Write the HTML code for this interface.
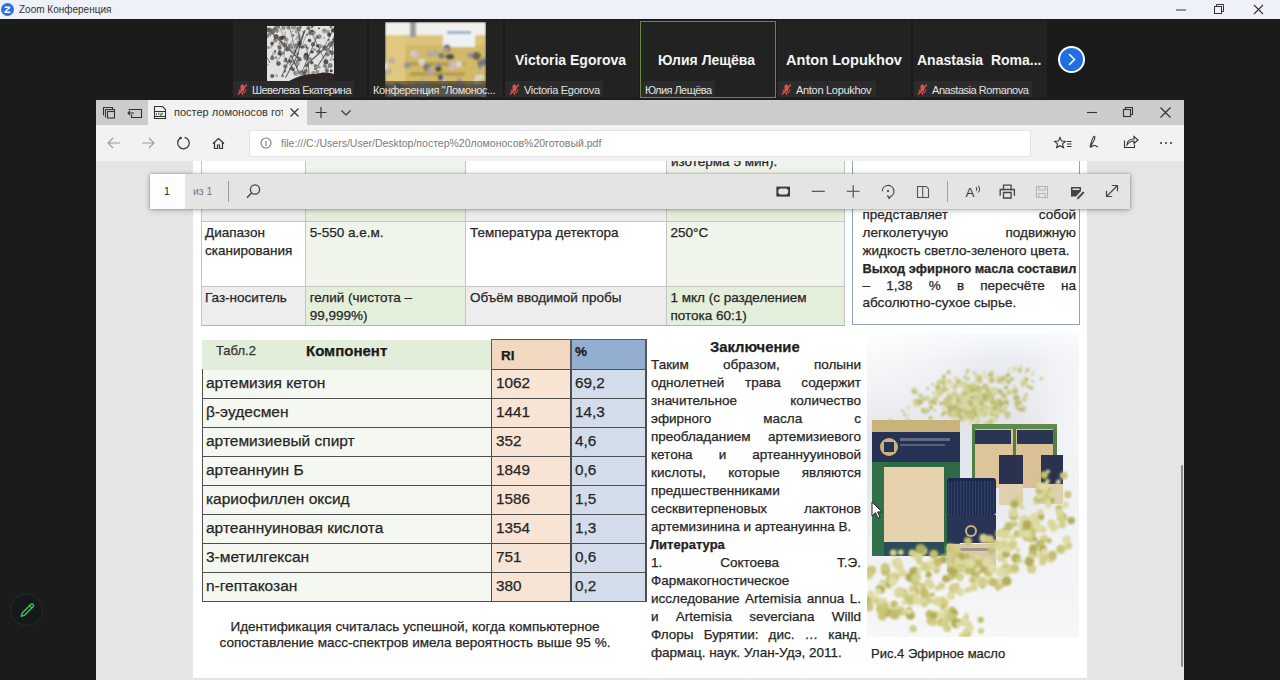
<!DOCTYPE html>
<html><head><meta charset="utf-8">
<style>
*{box-sizing:border-box;margin:0;padding:0}
html,body{width:1280px;height:680px;overflow:hidden;background:#1b1b1b;font-family:"Liberation Sans",sans-serif;position:relative}
.a{position:absolute}
#title{left:0;top:0;width:1280px;height:19px;background:#eef1f7}
.tile{top:20px;height:78px;width:134px;background:#222222}
.lbl{top:81px;height:16px;background:#2b2b2b;color:#e4e4e4;font-size:11px;letter-spacing:-0.3px;line-height:19px;white-space:nowrap}
.big{color:#f4f4f4;font-size:14px;font-weight:700;white-space:nowrap;top:52px;line-height:16px}
.mic{top:84px;width:11px;height:11px}
#win{left:96px;top:100px;width:1088px;height:580px;background:#e5e5e5;overflow:hidden}
#tabbar{left:0;top:0;width:1088px;height:25px;background:#cccccd}
#addrrow{left:0;top:25px;width:1088px;height:36px;background:#f2f2f2}
.t{white-space:nowrap}
.j{white-space:nowrap;text-align:justify;text-align-last:justify}
.pg .t,.pg .j{-webkit-text-stroke:0.25px currentColor}
</style></head><body>
<div id="title" class="a">
  <svg class="a" style="left:1px;top:3px" width="13" height="13" viewBox="0 0 13 13"><circle cx="6.5" cy="6.5" r="6.5" fill="#2b6fe0"/><path d="M3.6 3.6h5.6v1.3L5.4 8.6h4v1.3H3.4V8.6l3.8-3.7H3.6z" fill="#fff"/></svg>
  <div class="a" style="left:19px;top:3px;font-size:10px;line-height:13px;color:#333">Zoom Конференция</div>
</div>
<!-- gallery -->
<div class="a tile" style="left:233px"></div>
<div class="a tile" style="left:369px"></div>
<div class="a tile" style="left:505px"></div>
<div class="a tile" style="left:640px;top:21px;width:136px;height:77px;border:1px solid #6b8a3a"></div>
<div class="a tile" style="left:777px"></div>
<div class="a tile" style="left:913px"></div>
<!-- tile1 image: tree -->
<svg class="a" style="left:267px;top:26px" width="67" height="55" viewBox="0 0 67 55">
<defs><filter id="tb" x="-5%" y="-5%" width="110%" height="110%"><feGaussianBlur stdDeviation="0.7"/></filter></defs>
<rect width="67" height="55" fill="#e2e2e2"/>
<g filter="url(#tb)"><circle cx="15.9" cy="27.2" r="1.5" fill="#808080" opacity="0.64"/><circle cx="38.9" cy="30.3" r="2.4" fill="#2a2a2a" opacity="0.53"/><circle cx="15.7" cy="49.8" r="1.6" fill="#808080" opacity="0.64"/><circle cx="42.8" cy="7.5" r="1.9" fill="#808080" opacity="0.59"/><circle cx="1.0" cy="38.9" r="1.1" fill="#808080" opacity="0.42"/><circle cx="52.3" cy="41.2" r="1.3" fill="#808080" opacity="0.76"/><circle cx="58.9" cy="35.7" r="2.5" fill="#2a2a2a" opacity="0.76"/><circle cx="38.7" cy="48.2" r="1.0" fill="#6a6a6a" opacity="0.45"/><circle cx="9.1" cy="10.8" r="2.5" fill="#2a2a2a" opacity="0.79"/><circle cx="57.3" cy="21.1" r="2.3" fill="#808080" opacity="0.58"/><circle cx="39.2" cy="29.2" r="2.4" fill="#3a3a3a" opacity="0.83"/><circle cx="66.4" cy="33.6" r="1.1" fill="#6a6a6a" opacity="0.88"/><circle cx="60.6" cy="28.5" r="2.1" fill="#555" opacity="0.72"/><circle cx="66.2" cy="13.4" r="1.0" fill="#2a2a2a" opacity="0.83"/><circle cx="66.3" cy="4.4" r="2.2" fill="#2a2a2a" opacity="0.85"/><circle cx="1.3" cy="21.4" r="1.5" fill="#3a3a3a" opacity="0.42"/><circle cx="41.2" cy="2.2" r="2.1" fill="#6a6a6a" opacity="0.68"/><circle cx="61.8" cy="14.0" r="1.2" fill="#3a3a3a" opacity="0.55"/><circle cx="5.2" cy="30.0" r="0.9" fill="#555" opacity="0.89"/><circle cx="19.5" cy="13.2" r="2.0" fill="#6a6a6a" opacity="0.56"/><circle cx="64.2" cy="44.8" r="1.5" fill="#2a2a2a" opacity="0.83"/><circle cx="25.9" cy="43.3" r="2.0" fill="#3a3a3a" opacity="0.71"/><circle cx="63.0" cy="25.4" r="1.6" fill="#555" opacity="0.87"/><circle cx="29.3" cy="12.9" r="1.3" fill="#6a6a6a" opacity="0.41"/><circle cx="27.8" cy="29.0" r="0.8" fill="#808080" opacity="0.69"/><circle cx="8.9" cy="31.7" r="1.4" fill="#6a6a6a" opacity="0.74"/><circle cx="23.6" cy="35.3" r="2.1" fill="#3a3a3a" opacity="0.69"/><circle cx="64.0" cy="1.1" r="1.5" fill="#2a2a2a" opacity="0.55"/><circle cx="40.3" cy="8.9" r="1.1" fill="#6a6a6a" opacity="0.82"/><circle cx="17.7" cy="39.4" r="1.0" fill="#3a3a3a" opacity="0.89"/><circle cx="45.8" cy="6.6" r="1.7" fill="#6a6a6a" opacity="0.52"/><circle cx="12.6" cy="21.8" r="2.1" fill="#3a3a3a" opacity="0.70"/><circle cx="63.6" cy="33.7" r="1.2" fill="#555" opacity="0.44"/><circle cx="49.7" cy="10.9" r="1.8" fill="#6a6a6a" opacity="0.51"/><circle cx="8.1" cy="26.5" r="1.1" fill="#808080" opacity="0.49"/><circle cx="18.7" cy="40.4" r="2.0" fill="#808080" opacity="0.57"/><circle cx="8.7" cy="14.6" r="2.2" fill="#6a6a6a" opacity="0.63"/><circle cx="42.5" cy="14.5" r="1.8" fill="#3a3a3a" opacity="0.86"/><circle cx="10.5" cy="0.2" r="2.5" fill="#808080" opacity="0.89"/><circle cx="29.1" cy="47.5" r="2.5" fill="#555" opacity="0.42"/><circle cx="30.6" cy="37.7" r="2.1" fill="#6a6a6a" opacity="0.67"/><circle cx="59.6" cy="43.1" r="2.3" fill="#6a6a6a" opacity="0.46"/><circle cx="16.4" cy="1.8" r="2.2" fill="#808080" opacity="0.86"/><circle cx="60.1" cy="45.0" r="1.8" fill="#3a3a3a" opacity="0.64"/><circle cx="8.1" cy="25.2" r="1.2" fill="#3a3a3a" opacity="0.66"/><circle cx="27.7" cy="47.0" r="1.9" fill="#6a6a6a" opacity="0.46"/><circle cx="65.1" cy="27.0" r="2.3" fill="#3a3a3a" opacity="0.58"/><circle cx="13.2" cy="26.7" r="2.3" fill="#555" opacity="0.52"/><circle cx="18.3" cy="44.5" r="1.0" fill="#3a3a3a" opacity="0.64"/><circle cx="38.2" cy="20.0" r="2.2" fill="#555" opacity="0.53"/><circle cx="35.3" cy="21.1" r="1.7" fill="#3a3a3a" opacity="0.83"/><circle cx="51.9" cy="2.3" r="0.9" fill="#2a2a2a" opacity="0.89"/><circle cx="57.2" cy="4.3" r="1.7" fill="#6a6a6a" opacity="0.48"/><circle cx="4.8" cy="19.3" r="1.5" fill="#6a6a6a" opacity="0.58"/><circle cx="12.8" cy="16.4" r="1.0" fill="#808080" opacity="0.40"/><circle cx="48.4" cy="39.8" r="1.8" fill="#3a3a3a" opacity="0.59"/><circle cx="40.5" cy="39.1" r="1.5" fill="#3a3a3a" opacity="0.71"/><circle cx="28.9" cy="18.6" r="1.7" fill="#6a6a6a" opacity="0.61"/><circle cx="46.5" cy="23.0" r="1.2" fill="#808080" opacity="0.54"/><circle cx="39.5" cy="40.2" r="1.2" fill="#555" opacity="0.84"/><circle cx="62.7" cy="18.7" r="2.4" fill="#6a6a6a" opacity="0.46"/><circle cx="46.3" cy="47.0" r="2.1" fill="#808080" opacity="0.80"/><circle cx="44.7" cy="36.7" r="1.8" fill="#3a3a3a" opacity="0.81"/><circle cx="48.0" cy="23.7" r="1.2" fill="#2a2a2a" opacity="0.42"/><circle cx="6.2" cy="5.0" r="2.4" fill="#555" opacity="0.81"/><circle cx="22.9" cy="42.6" r="0.8" fill="#3a3a3a" opacity="0.74"/><circle cx="56.0" cy="47.6" r="1.8" fill="#3a3a3a" opacity="0.42"/><circle cx="51.4" cy="25.6" r="2.1" fill="#3a3a3a" opacity="0.68"/><circle cx="6.7" cy="27.7" r="1.8" fill="#808080" opacity="0.49"/><circle cx="5.2" cy="49.9" r="2.0" fill="#2a2a2a" opacity="0.71"/><circle cx="50.5" cy="19.7" r="1.5" fill="#2a2a2a" opacity="0.87"/><circle cx="37.3" cy="48.3" r="1.5" fill="#555" opacity="0.89"/><circle cx="27.7" cy="37.4" r="1.1" fill="#808080" opacity="0.78"/><circle cx="45.1" cy="25.9" r="1.7" fill="#2a2a2a" opacity="0.85"/><circle cx="10.0" cy="4.8" r="2.1" fill="#808080" opacity="0.88"/><circle cx="39.3" cy="42.9" r="1.0" fill="#555" opacity="0.47"/><circle cx="34.5" cy="46.7" r="2.3" fill="#808080" opacity="0.88"/><circle cx="19.8" cy="35.3" r="1.5" fill="#808080" opacity="0.69"/><circle cx="17.9" cy="10.9" r="0.8" fill="#2a2a2a" opacity="0.80"/><circle cx="13.4" cy="28.5" r="1.2" fill="#2a2a2a" opacity="0.79"/><circle cx="9.6" cy="49.6" r="1.7" fill="#808080" opacity="0.50"/><circle cx="38.9" cy="45.1" r="2.0" fill="#3a3a3a" opacity="0.64"/><circle cx="48.3" cy="42.8" r="1.5" fill="#3a3a3a" opacity="0.63"/><circle cx="15.4" cy="11.7" r="2.1" fill="#3a3a3a" opacity="0.88"/><circle cx="57.2" cy="12.1" r="1.1" fill="#6a6a6a" opacity="0.47"/><circle cx="41.7" cy="33.8" r="0.9" fill="#6a6a6a" opacity="0.48"/><circle cx="3.0" cy="9.2" r="1.0" fill="#3a3a3a" opacity="0.46"/><circle cx="17.7" cy="45.7" r="0.9" fill="#2a2a2a" opacity="0.69"/><circle cx="45.3" cy="0.3" r="1.4" fill="#2a2a2a" opacity="0.59"/><circle cx="5.2" cy="32.2" r="2.1" fill="#2a2a2a" opacity="0.60"/><circle cx="36.5" cy="6.0" r="1.3" fill="#2a2a2a" opacity="0.46"/><circle cx="59.4" cy="45.4" r="1.0" fill="#6a6a6a" opacity="0.74"/><circle cx="24.7" cy="22.5" r="2.0" fill="#6a6a6a" opacity="0.45"/><circle cx="63.3" cy="16.9" r="1.8" fill="#808080" opacity="0.46"/><circle cx="33.1" cy="17.6" r="2.1" fill="#808080" opacity="0.77"/><circle cx="43.3" cy="36.5" r="1.1" fill="#6a6a6a" opacity="0.84"/><circle cx="43.9" cy="6.2" r="2.5" fill="#555" opacity="0.86"/><circle cx="43.2" cy="32.5" r="1.6" fill="#6a6a6a" opacity="0.72"/><circle cx="30.7" cy="15.6" r="1.1" fill="#3a3a3a" opacity="0.45"/><circle cx="12.1" cy="27.7" r="1.8" fill="#2a2a2a" opacity="0.58"/><circle cx="17.8" cy="19.2" r="2.4" fill="#3a3a3a" opacity="0.64"/><circle cx="18.2" cy="34.8" r="1.7" fill="#6a6a6a" opacity="0.87"/><circle cx="30.0" cy="40.5" r="0.9" fill="#2a2a2a" opacity="0.82"/><circle cx="7.5" cy="13.5" r="1.0" fill="#3a3a3a" opacity="0.68"/><circle cx="61.0" cy="5.6" r="2.1" fill="#808080" opacity="0.61"/><circle cx="49.8" cy="40.8" r="2.1" fill="#808080" opacity="0.70"/><circle cx="57.6" cy="39.9" r="1.8" fill="#555" opacity="0.68"/><circle cx="13.5" cy="12.5" r="2.2" fill="#3a3a3a" opacity="0.82"/><circle cx="29.8" cy="20.4" r="2.3" fill="#6a6a6a" opacity="0.68"/><circle cx="39.1" cy="31.7" r="2.6" fill="#6a6a6a" opacity="0.85"/><circle cx="44.7" cy="1.5" r="1.1" fill="#3a3a3a" opacity="0.45"/><circle cx="50.6" cy="11.7" r="1.1" fill="#2a2a2a" opacity="0.50"/><circle cx="52.4" cy="10.6" r="2.3" fill="#2a2a2a" opacity="0.46"/><circle cx="19.0" cy="32.9" r="1.1" fill="#2a2a2a" opacity="0.80"/><circle cx="41.8" cy="2.5" r="1.4" fill="#555" opacity="0.65"/><circle cx="33.4" cy="0.9" r="1.4" fill="#6a6a6a" opacity="0.84"/><circle cx="46.5" cy="6.7" r="2.3" fill="#808080" opacity="0.79"/><circle cx="2.3" cy="4.0" r="2.6" fill="#555" opacity="0.87"/><circle cx="57.7" cy="21.9" r="2.2" fill="#2a2a2a" opacity="0.56"/><circle cx="52.7" cy="20.4" r="2.3" fill="#555" opacity="0.60"/><circle cx="31.7" cy="3.4" r="2.3" fill="#555" opacity="0.72"/><circle cx="20.4" cy="23.2" r="2.2" fill="#2a2a2a" opacity="0.62"/><circle cx="30.5" cy="1.9" r="1.3" fill="#6a6a6a" opacity="0.62"/><circle cx="24.2" cy="20.1" r="2.5" fill="#555" opacity="0.53"/><circle cx="24.8" cy="42.8" r="1.8" fill="#555" opacity="0.50"/><circle cx="11.4" cy="20.2" r="1.1" fill="#3a3a3a" opacity="0.47"/><circle cx="40.8" cy="22.1" r="1.1" fill="#3a3a3a" opacity="0.60"/><circle cx="21.3" cy="1.6" r="2.1" fill="#555" opacity="0.60"/><circle cx="26.6" cy="1.3" r="2.5" fill="#555" opacity="0.52"/><circle cx="26.1" cy="9.5" r="1.4" fill="#3a3a3a" opacity="0.57"/><circle cx="8.3" cy="2.6" r="2.1" fill="#6a6a6a" opacity="0.89"/><circle cx="63.1" cy="39.5" r="2.5" fill="#2a2a2a" opacity="0.52"/><circle cx="17.8" cy="40.7" r="1.9" fill="#6a6a6a" opacity="0.56"/><circle cx="3.8" cy="21.8" r="1.0" fill="#808080" opacity="0.40"/><circle cx="2.0" cy="4.5" r="1.1" fill="#3a3a3a" opacity="0.64"/><circle cx="12.7" cy="25.5" r="1.4" fill="#2a2a2a" opacity="0.57"/><circle cx="32.1" cy="17.6" r="2.0" fill="#2a2a2a" opacity="0.55"/><circle cx="40.7" cy="47.3" r="1.0" fill="#6a6a6a" opacity="0.49"/><circle cx="27.7" cy="25.4" r="1.8" fill="#808080" opacity="0.74"/><circle cx="62.2" cy="8.7" r="2.1" fill="#2a2a2a" opacity="0.82"/><circle cx="37.1" cy="46.2" r="1.5" fill="#2a2a2a" opacity="0.62"/><circle cx="29.8" cy="35.1" r="1.4" fill="#555" opacity="0.65"/><circle cx="50.4" cy="45.8" r="2.1" fill="#2a2a2a" opacity="0.42"/><circle cx="11.5" cy="37.6" r="2.3" fill="#3a3a3a" opacity="0.78"/><circle cx="45.4" cy="4.9" r="1.2" fill="#3a3a3a" opacity="0.84"/><circle cx="58.4" cy="22.5" r="2.4" fill="#6a6a6a" opacity="0.90"/><circle cx="0.1" cy="9.7" r="2.2" fill="#3a3a3a" opacity="0.57"/><circle cx="20.9" cy="22.5" r="2.3" fill="#555" opacity="0.52"/><circle cx="3.3" cy="7.6" r="2.0" fill="#808080" opacity="0.89"/><circle cx="7.5" cy="14.4" r="1.2" fill="#808080" opacity="0.66"/><circle cx="33.8" cy="45.4" r="1.4" fill="#808080" opacity="0.79"/><circle cx="31.3" cy="31.1" r="0.9" fill="#3a3a3a" opacity="0.70"/><circle cx="57.5" cy="5.1" r="2.5" fill="#6a6a6a" opacity="0.44"/><circle cx="31.2" cy="11.1" r="2.3" fill="#808080" opacity="0.45"/><circle cx="32.5" cy="33.4" r="2.1" fill="#2a2a2a" opacity="0.70"/><circle cx="29.9" cy="5.5" r="2.3" fill="#808080" opacity="0.62"/><circle cx="25.4" cy="5.8" r="0.8" fill="#6a6a6a" opacity="0.76"/><circle cx="5.2" cy="17.3" r="1.7" fill="#3a3a3a" opacity="0.86"/><circle cx="46.0" cy="18.2" r="2.2" fill="#3a3a3a" opacity="0.70"/><circle cx="14.3" cy="17.5" r="2.6" fill="#6a6a6a" opacity="0.52"/><path d="M29.4 28.8L22.3 0.0" stroke="#333" stroke-width="0.7" opacity=".7"/><path d="M14.7 50.6L24.1 29.1" stroke="#333" stroke-width="1.1" opacity=".7"/><path d="M57.1 32.9L44.8 7.3" stroke="#333" stroke-width="0.8" opacity=".7"/><path d="M59.9 54.4L58.7 29.7" stroke="#333" stroke-width="0.5" opacity=".7"/><path d="M64.2 20.6L79.8 9.9" stroke="#333" stroke-width="0.6" opacity=".7"/><path d="M33.7 22.1L32.6 7.3" stroke="#333" stroke-width="0.7" opacity=".7"/><path d="M32.9 21.3L31.7 6.4" stroke="#333" stroke-width="1.1" opacity=".7"/><path d="M9.6 35.5L25.9 14.4" stroke="#333" stroke-width="0.7" opacity=".7"/><path d="M32.6 48.3L24.0 29.0" stroke="#333" stroke-width="1.1" opacity=".7"/><path d="M42.5 53.0L39.7 19.5" stroke="#333" stroke-width="0.9" opacity=".7"/><path d="M66.9 27.8L85.2 10.6" stroke="#333" stroke-width="0.5" opacity=".7"/><path d="M25.0 32.6L38.3 3.9" stroke="#333" stroke-width="1.2" opacity=".7"/><path d="M34.8 20.5L40.0 6.8" stroke="#333" stroke-width="0.5" opacity=".7"/><path d="M63.7 20.1L83.0 -9.8" stroke="#333" stroke-width="0.8" opacity=".7"/><path d="M64.7 32.7L66.8 10.4" stroke="#333" stroke-width="0.7" opacity=".7"/><path d="M18.5 51.7L32.0 26.6" stroke="#333" stroke-width="1.1" opacity=".7"/><path d="M30.2 29.2L37.0 6.7" stroke="#333" stroke-width="1.1" opacity=".7"/><path d="M22.7 21.0L4.2 -13.9" stroke="#333" stroke-width="0.6" opacity=".7"/><path d="M51.0 39.7L69.2 11.1" stroke="#333" stroke-width="1.2" opacity=".7"/><path d="M27.6 46.3L21.1 32.9" stroke="#333" stroke-width="0.5" opacity=".7"/><path d="M3.0 37.0L-14.5 6.6" stroke="#333" stroke-width="0.9" opacity=".7"/><path d="M34.9 46.4L49.3 12.0" stroke="#333" stroke-width="0.9" opacity=".7"/><path d="M24.9 42.1L16.6 30.3" stroke="#333" stroke-width="0.6" opacity=".7"/><path d="M55.8 23.6L66.7 2.5" stroke="#333" stroke-width="0.7" opacity=".7"/><path d="M17.1 29.9L18.3 5.5" stroke="#333" stroke-width="0.6" opacity=".7"/>
<path d="M0 2L33 34" stroke="#6e5d50" stroke-width="1.6"/><path d="M67 14L38 40" stroke="#6e5d50" stroke-width="1.4"/>
<path d="M22 55Q36 47 48 48Q60 45 67 48V55z" fill="#2e2622"/>
</g></svg>
<!-- tile2 image: conference -->
<svg class="a" style="left:385px;top:22px" width="101" height="75" viewBox="0 0 101 75">
<defs><filter id="cb" x="-5%" y="-5%" width="110%" height="110%"><feGaussianBlur stdDeviation="1"/></filter></defs>
<g filter="url(#cb)">
<rect width="101" height="75" fill="#d2b968"/>
<rect width="101" height="13" fill="#f2f0ea"/>
<rect x="0" y="13" width="101" height="10" fill="#dcc47c"/>
<rect x="58" y="5" width="32" height="20" fill="#eef2f4"/><rect x="62" y="9" width="24" height="3" fill="#9ab0c0"/>
<rect x="25" y="0" width="6" height="15" fill="#9a9a9a"/>
<rect x="0" y="13" width="20" height="62" fill="#e0c880"/>
<path d="M20 40h60v4H20zM25 50h55v4H25zM30 60h50v4H30z" fill="#b89c50"/>
<ellipse cx="3.8" cy="49.3" rx="2.6" ry="3.6" fill="#b4a8a0" opacity=".85"/><ellipse cx="61.9" cy="26.5" rx="3.4" ry="3.9" fill="#3a3a40" opacity=".85"/><ellipse cx="12.6" cy="64.3" rx="3.9" ry="3.2" fill="#3a3a40" opacity=".85"/><ellipse cx="67.5" cy="43.6" rx="3.3" ry="4.7" fill="#c8c0d0" opacity=".85"/><ellipse cx="65.0" cy="34.8" rx="4.3" ry="3.0" fill="#3a3a40" opacity=".85"/><ellipse cx="95.1" cy="44.8" rx="2.1" ry="3.0" fill="#8d8fa8" opacity=".85"/><ellipse cx="95.3" cy="40.9" rx="3.0" ry="3.2" fill="#6a6e80" opacity=".85"/><ellipse cx="42.2" cy="45.7" rx="4.2" ry="3.7" fill="#6a6e80" opacity=".85"/><ellipse cx="74.5" cy="59.9" rx="2.3" ry="4.1" fill="#8d8fa8" opacity=".85"/><ellipse cx="63.7" cy="65.9" rx="2.0" ry="3.2" fill="#5a5550" opacity=".85"/><ellipse cx="7.0" cy="38.4" rx="3.2" ry="3.2" fill="#b4a8a0" opacity=".85"/><ellipse cx="56.5" cy="33.7" rx="3.2" ry="2.9" fill="#6a6e80" opacity=".85"/><ellipse cx="91.5" cy="33.9" rx="4.5" ry="4.2" fill="#5a5550" opacity=".85"/><ellipse cx="0.9" cy="44.6" rx="2.5" ry="4.1" fill="#e0ddd8" opacity=".85"/><ellipse cx="19.1" cy="66.1" rx="4.2" ry="2.6" fill="#6a6e80" opacity=".85"/><ellipse cx="54.0" cy="44.1" rx="2.3" ry="3.5" fill="#8d8fa8" opacity=".85"/><ellipse cx="28.4" cy="31.6" rx="2.4" ry="2.8" fill="#e0ddd8" opacity=".85"/><ellipse cx="94.7" cy="55.2" rx="4.3" ry="2.5" fill="#e0ddd8" opacity=".85"/><ellipse cx="100.7" cy="74.0" rx="2.6" ry="3.4" fill="#3a3a40" opacity=".85"/><ellipse cx="10.5" cy="67.3" rx="3.2" ry="4.3" fill="#b4a8a0" opacity=".85"/><ellipse cx="75.6" cy="64.1" rx="3.4" ry="3.7" fill="#b4a8a0" opacity=".85"/><ellipse cx="30.8" cy="32.5" rx="3.1" ry="3.5" fill="#c8c0d0" opacity=".85"/><ellipse cx="60.0" cy="71.6" rx="4.1" ry="2.9" fill="#c8c0d0" opacity=".85"/><ellipse cx="84.8" cy="33.4" rx="2.7" ry="3.0" fill="#8d8fa8" opacity=".85"/><ellipse cx="61.0" cy="27.8" rx="3.5" ry="2.9" fill="#b4a8a0" opacity=".85"/><ellipse cx="1.4" cy="68.5" rx="4.0" ry="5.0" fill="#5a5550" opacity=".85"/><ellipse cx="37.8" cy="59.9" rx="2.7" ry="3.7" fill="#b4a8a0" opacity=".85"/><ellipse cx="44.6" cy="32.3" rx="3.5" ry="3.3" fill="#b4a8a0" opacity=".85"/><ellipse cx="56.9" cy="56.8" rx="3.5" ry="4.3" fill="#c8c0d0" opacity=".85"/><ellipse cx="99.0" cy="71.8" rx="4.2" ry="4.6" fill="#e0ddd8" opacity=".85"/><ellipse cx="98.6" cy="39.9" rx="2.5" ry="4.0" fill="#6a6e80" opacity=".85"/><ellipse cx="74.0" cy="42.1" rx="3.6" ry="3.2" fill="#e0ddd8" opacity=".85"/><ellipse cx="45.7" cy="48.9" rx="3.3" ry="4.7" fill="#b4a8a0" opacity=".85"/><ellipse cx="53.4" cy="47.1" rx="3.5" ry="2.7" fill="#3a3a40" opacity=".85"/><ellipse cx="55.5" cy="55.5" rx="2.7" ry="3.1" fill="#3a3a40" opacity=".85"/><ellipse cx="38.8" cy="74.1" rx="2.9" ry="3.0" fill="#b4a8a0" opacity=".85"/><ellipse cx="49.9" cy="30.9" rx="3.8" ry="3.5" fill="#b4a8a0" opacity=".85"/><ellipse cx="36.5" cy="40.0" rx="3.3" ry="3.5" fill="#e0ddd8" opacity=".85"/><ellipse cx="91.7" cy="59.3" rx="2.3" ry="3.7" fill="#e0ddd8" opacity=".85"/><ellipse cx="22.2" cy="43.5" rx="3.5" ry="2.8" fill="#8d8fa8" opacity=".85"/>
<rect x="0" y="62" width="101" height="13" fill="#6a665e" opacity=".6"/>
</g></svg>
<!-- big names -->
<div class="a big" style="left:515px">Victoria Egorova</div>
<div class="a big" style="left:658px">Юлия Лещёва</div>
<div class="a big" style="left:786px;font-size:14.6px">Anton Lopukhov</div>
<div class="a big" style="left:917px;letter-spacing:0">Anastasia&nbsp; Roma...</div>
<!-- labels -->
<div class="a lbl" style="left:233px;width:121px;padding-left:19px;letter-spacing:-0.55px">Шевелева Екатерина</div>
<div class="a lbl" style="left:369px;width:133px;padding-left:4px;letter-spacing:-0.4px;background:rgba(40,40,40,.55)">Конференция "Ломонос...</div>
<div class="a lbl" style="left:505px;width:98px;padding-left:19px">Victoria Egorova</div>
<div class="a lbl" style="left:641px;width:74px;padding-left:4px;letter-spacing:-0.55px">Юлия Лещёва</div>
<div class="a lbl" style="left:778px;width:98px;padding-left:18px">Anton Lopukhov</div>
<div class="a lbl" style="left:914px;width:118px;padding-left:18px;letter-spacing:-0.45px">Anastasia Romanova</div>
<!-- mic icons -->
<svg class="a mic" style="left:237px" viewBox="0 0 11 11"><rect x="3.5" y="0.5" width="4" height="7" rx="2" fill="#d9534f"/><path d="M2 5.5a3.5 3.5 0 0 0 7 0M5.5 9v2" stroke="#d9534f" stroke-width="1" fill="none"/><path d="M1 10.5L10 0.5" stroke="#d9534f" stroke-width="1.2"/></svg>
<svg class="a mic" style="left:509px" viewBox="0 0 11 11"><rect x="3.5" y="0.5" width="4" height="7" rx="2" fill="#d9534f"/><path d="M2 5.5a3.5 3.5 0 0 0 7 0M5.5 9v2" stroke="#d9534f" stroke-width="1" fill="none"/><path d="M1 10.5L10 0.5" stroke="#d9534f" stroke-width="1.2"/></svg>
<svg class="a mic" style="left:781px" viewBox="0 0 11 11"><rect x="3.5" y="0.5" width="4" height="7" rx="2" fill="#d9534f"/><path d="M2 5.5a3.5 3.5 0 0 0 7 0M5.5 9v2" stroke="#d9534f" stroke-width="1" fill="none"/><path d="M1 10.5L10 0.5" stroke="#d9534f" stroke-width="1.2"/></svg>
<svg class="a mic" style="left:917px" viewBox="0 0 11 11"><rect x="3.5" y="0.5" width="4" height="7" rx="2" fill="#d9534f"/><path d="M2 5.5a3.5 3.5 0 0 0 7 0M5.5 9v2" stroke="#d9534f" stroke-width="1" fill="none"/><path d="M1 10.5L10 0.5" stroke="#d9534f" stroke-width="1.2"/></svg>
<!-- next arrow -->
<div class="a" style="left:1058px;top:46px;width:27px;height:27px;border-radius:50%;background:#fff"></div>
<div class="a" style="left:1060px;top:48px;width:23px;height:23px;border-radius:50%;background:#1e6fe0"></div>
<svg class="a" style="left:1064px;top:52px" width="15" height="15" viewBox="0 0 15 15"><path d="M5.5 2.5L10.5 7.5L5.5 12.5" stroke="#fff" stroke-width="1.6" fill="none" stroke-linecap="round"/></svg>
<!-- window controls zoom -->
<svg class="a" style="left:1170px;top:4px" width="100" height="12" viewBox="0 0 100 12"><path d="M6 6h10" stroke="#333" stroke-width="1"/><rect x="44.5" y="2.5" width="7" height="7" fill="none" stroke="#333"/><path d="M46.5 2.5v-2h7v7h-2" fill="none" stroke="#333"/><path d="M84 1l9 9M93 1l-9 9" stroke="#333" stroke-width="1.1"/></svg>
<!-- pen button -->
<svg class="a" style="left:9px;top:592px" width="36" height="36" viewBox="0 0 36 36"><circle cx="17.6" cy="17.6" r="16" fill="#14191b" stroke="#262b2e" stroke-width="1"/>
<path d="M12.2 24.3l1.2-3.6 8.3-8.3a1.6 1.6 0 0 1 2.3 0l.1.1a1.6 1.6 0 0 1 0 2.3l-8.3 8.3z" fill="none" stroke="#3cc35c" stroke-width="1.4" stroke-linejoin="round"/><path d="M20.5 13.6l2.4 2.4" stroke="#3cc35c" stroke-width="1.2"/></svg>
<div id="win" class="a">
  <div id="tabbar" class="a"></div>
  <div id="addrrow" class="a"></div>
  <!-- active tab -->
  <div class="a" style="left:52px;top:0;width:159px;height:25px;background:#f2f2f2"></div>
  <!-- tab bar icons -->
  <svg class="a" style="left:0;top:0" width="1088" height="25" viewBox="0 0 1088 25">
    <g fill="none" stroke="#333" stroke-width="1.1">
      <path d="M7.5 15.5v-8h9v2M9.5 17.5v-8h9v2"/><rect x="11.5" y="11.5" width="7" height="6.5"/>
      <path d="M32.5 9.5h13v8h-10v-3M38 13h-6M34 11l-2 2 2 2"/>
      <!-- pdf icon -->
      <path d="M58.5 18.5v-12h8l3 3v9z"/><path d="M58.5 11.5h11M58.5 16.5h11"/>
      <!-- close X -->
      <path d="M194.5 8.5l8 8M202.5 8.5l-8 8"/>
      <!-- plus -->
      <path d="M219.5 12.5h11M225 7v11" stroke-width="1.2"/>
      <path d="M245.5 10.5l4.5 4.5 4.5-4.5"/>
      <!-- window controls -->
      <path d="M991 12.5h10"/>
      <rect x="1027.5" y="9.5" width="7" height="7"/><path d="M1029.5 9.5v-2h7v7h-2"/>
      <path d="M1064.5 7.5l10 10M1074.5 7.5l-10 10" stroke-width="1.2"/>
    </g>
    <path d="M60.5 13v2.4M62 13h1v1.2h-1M64.3 13v2.4h1M67 13h-1.2v2.4M65.8 14.2h1" stroke="#555" stroke-width=".8" fill="none"/>
  </svg>
  <div class="a" style="left:78px;top:5px;width:109px;height:15px;overflow:hidden;font-size:11px;line-height:15px;color:#333;white-space:nowrap;">постер ломоносов готовый.pdf</div>
  <!-- address box -->
  <div class="a" style="left:153px;top:30px;width:782px;height:27px;background:#fff;border:1px solid #e3e3e3"></div>
  <svg class="a" style="left:0;top:25px" width="1088" height="36" viewBox="0 0 1088 36">
    <g fill="none" stroke-width="1.1">
      <path d="M12 18h12M17 13l-5 5 5 5" stroke="#9a9a9a"/>
      <path d="M46 18h12M53 13l5 5-5 5" stroke="#9a9a9a"/>
      <path d="M88.6 12.3A5.8 5.8 0 1 1 84.4 13.1" stroke="#333" stroke-width="1.2"/><circle cx="84.6" cy="13" r="1.3" fill="#333" stroke="none"/>
      <path d="M117 18.5l5.5-5 5.5 5M118.5 17v6.5h3v-3.5h2v3.5h3v-6.5" stroke="#333" stroke-width="1.2"/>
      <circle cx="170" cy="18" r="5" stroke="#777"/><path d="M170 16v5" stroke="#777"/>
      <!-- right icons -->
      <path d="M964 12.5l1.6 3.6 3.9.3-3 2.5 1 3.8-3.5-2-3.4 2 1-3.8-3-2.5 3.9-.3z" stroke="#333"/><path d="M971 16.5h4.5M971 19h4.5M971 21.5h4.5" stroke="#333"/>
      <path d="M994 22c1-4 2-8 3.5-10s2.5 1-1 6-2 5 0 3 2.5 0 5.5 1" stroke="#333"/>
      <path d="M1028.5 15.5v7h10v-3" stroke="#333"/><path d="M1031 20c0-4 3-6 7-6v-2.5l4 3.5-4 3.5v-2.5c-3 0-5 1-7 4z" stroke="#333"/>
    </g>
    <g fill="#333"><circle cx="1065" cy="18" r="1"/><circle cx="1070" cy="18" r="1"/><circle cx="1075" cy="18" r="1"/></g>
  </svg>
  <div class="a" style="left:185px;top:36px;font-size:10.5px;line-height:14px;color:#7a7a7a;white-space:nowrap">file:///C:/Users/User/Desktop/постер%20ломоносов%20готовый.pdf</div>
  <!-- content -->
  <div class="a pg" style="left:97px;top:61px;width:894px;height:517px;background:#fff;overflow:hidden">
  <div class="a" style="left:0;top:0;width:894px;height:517px">
<div class="a" style="left:8.0px;top:-41.0px;width:104.5px;height:75.0px;background:#ffffff;"></div>
<div class="a" style="left:112.5px;top:-41.0px;width:160.0px;height:75.0px;background:#eff5ea;"></div>
<div class="a" style="left:272.5px;top:-41.0px;width:200.5px;height:75.0px;background:#ffffff;"></div>
<div class="a" style="left:473.0px;top:-41.0px;width:178.0px;height:75.0px;background:#eff5ea;"></div>
<div class="a" style="left:8.0px;top:34.0px;width:104.5px;height:26.0px;background:#ededed;"></div>
<div class="a" style="left:112.5px;top:34.0px;width:160.0px;height:26.0px;background:#e3eedb;"></div>
<div class="a" style="left:272.5px;top:34.0px;width:200.5px;height:26.0px;background:#ededed;"></div>
<div class="a" style="left:473.0px;top:34.0px;width:178.0px;height:26.0px;background:#e3eedb;"></div>
<div class="a" style="left:8.0px;top:60.0px;width:104.5px;height:65.0px;background:#ffffff;"></div>
<div class="a" style="left:112.5px;top:60.0px;width:160.0px;height:65.0px;background:#eff5ea;"></div>
<div class="a" style="left:272.5px;top:60.0px;width:200.5px;height:65.0px;background:#ffffff;"></div>
<div class="a" style="left:473.0px;top:60.0px;width:178.0px;height:65.0px;background:#eff5ea;"></div>
<div class="a" style="left:8.0px;top:125.0px;width:104.5px;height:39.5px;background:#ededed;"></div>
<div class="a" style="left:112.5px;top:125.0px;width:160.0px;height:39.5px;background:#e3eedb;"></div>
<div class="a" style="left:272.5px;top:125.0px;width:200.5px;height:39.5px;background:#ededed;"></div>
<div class="a" style="left:473.0px;top:125.0px;width:178.0px;height:39.5px;background:#e3eedb;"></div>
<div class="a" style="left:7.5px;top:-41.0px;width:1.0px;height:205.5px;background:#c4c4c4;"></div>
<div class="a" style="left:112.0px;top:-41.0px;width:1.0px;height:205.5px;background:#c4c4c4;"></div>
<div class="a" style="left:272.0px;top:-41.0px;width:1.0px;height:205.5px;background:#c4c4c4;"></div>
<div class="a" style="left:472.5px;top:-41.0px;width:1.0px;height:205.5px;background:#c4c4c4;"></div>
<div class="a" style="left:650.5px;top:-41.0px;width:1.0px;height:205.5px;background:#c4c4c4;"></div>
<div class="a" style="left:7.5px;top:33.5px;width:644.0px;height:1.0px;background:#c4c4c4;"></div>
<div class="a" style="left:7.5px;top:59.5px;width:644.0px;height:1.0px;background:#c4c4c4;"></div>
<div class="a" style="left:7.5px;top:124.5px;width:644.0px;height:1.0px;background:#c4c4c4;"></div>
<div class="a" style="left:7.5px;top:164.0px;width:644.0px;height:1.0px;background:#c4c4c4;"></div>
<div class="a" style="left:7.5px;top:164.0px;width:644.0px;height:1.2px;background:#b4b4b4;"></div>
<div class="a t" style="left:478.0px;top:-7.98px;font-size:13.5px;line-height:18px;color:#262626;">изотерма 5 мин).</div>
<div class="a t" style="left:12.0px;top:63.32px;font-size:13.5px;line-height:18px;color:#262626;">Диапазон</div>
<div class="a t" style="left:12.0px;top:81.32px;font-size:13.5px;line-height:18px;color:#262626;">сканирования</div>
<div class="a t" style="left:116.7px;top:63.32px;font-size:13.5px;line-height:18px;color:#262626;">5-550 а.е.м.</div>
<div class="a t" style="left:277.0px;top:63.32px;font-size:13.5px;line-height:18px;color:#262626;">Температура детектора</div>
<div class="a t" style="left:477.5px;top:63.32px;font-size:13.5px;line-height:18px;color:#262626;">250°C</div>
<div class="a t" style="left:12.0px;top:128.32px;font-size:13.5px;line-height:18px;color:#262626;">Газ-носитель</div>
<div class="a t" style="left:116.7px;top:128.32px;font-size:13.5px;line-height:18px;color:#262626;">гелий (чистота –</div>
<div class="a t" style="left:116.7px;top:146.32px;font-size:13.5px;line-height:18px;color:#262626;">99,999%)</div>
<div class="a t" style="left:277.0px;top:128.32px;font-size:13.5px;line-height:18px;color:#262626;">Объём вводимой пробы</div>
<div class="a t" style="left:477.5px;top:128.32px;font-size:13.5px;line-height:18px;color:#262626;">1 мкл (с разделением</div>
<div class="a t" style="left:477.5px;top:146.32px;font-size:13.5px;line-height:18px;color:#262626;">потока 60:1)</div>
<div class="a" style="left:659px;top:-41px;width:228px;height:204.5px;border:1px solid #8ea3bd;background:#fff"></div>
<div class="a j" style="left:669.5px;top:45.32px;width:213.5px;font-size:13.5px;line-height:18px;color:#262626;">представляет собой</div>
<div class="a j" style="left:669.5px;top:62.92px;width:213.5px;font-size:13.5px;line-height:18px;color:#262626;">легколетучую подвижную</div>
<div class="a t" style="left:669.5px;top:80.62px;width:213.5px;font-size:13.5px;line-height:18px;color:#262626;">жидкость светло-зеленого цвета.</div>
<div class="a j" style="left:669.5px;top:98.56px;width:213.5px;font-size:12.8px;line-height:18px;color:#262626;font-weight:700;">Выход эфирного масла составил</div>
<div class="a j" style="left:669.5px;top:115.82px;width:213.5px;font-size:13.5px;line-height:18px;color:#262626;">– 1,38 % в пересчёте на</div>
<div class="a t" style="left:669.5px;top:133.32px;width:213.5px;font-size:13.5px;line-height:18px;color:#262626;">абсолютно-сухое сырье.</div>
<div class="a" style="left:8.5px;top:178.5px;width:290.0px;height:30.0px;background:#e2eed9;"></div>
<div class="a" style="left:298.5px;top:178.5px;width:79.5px;height:30.0px;background:#f2d8c0;"></div>
<div class="a" style="left:378.0px;top:178.5px;width:75.0px;height:30.0px;background:#93aed0;"></div>
<div class="a" style="left:9.0px;top:208.5px;width:289.5px;height:29.0px;background:#f5f8f1;"></div>
<div class="a" style="left:298.5px;top:208.5px;width:79.5px;height:29.0px;background:#f8e4d5;"></div>
<div class="a" style="left:378.0px;top:208.5px;width:75.0px;height:29.0px;background:#d3dcea;"></div>
<div class="a" style="left:9.0px;top:237.5px;width:289.5px;height:29.0px;background:#f5f8f1;"></div>
<div class="a" style="left:298.5px;top:237.5px;width:79.5px;height:29.0px;background:#f8e4d5;"></div>
<div class="a" style="left:378.0px;top:237.5px;width:75.0px;height:29.0px;background:#d3dcea;"></div>
<div class="a" style="left:9.0px;top:266.5px;width:289.5px;height:29.0px;background:#f5f8f1;"></div>
<div class="a" style="left:298.5px;top:266.5px;width:79.5px;height:29.0px;background:#f8e4d5;"></div>
<div class="a" style="left:378.0px;top:266.5px;width:75.0px;height:29.0px;background:#d3dcea;"></div>
<div class="a" style="left:9.0px;top:295.5px;width:289.5px;height:29.0px;background:#f5f8f1;"></div>
<div class="a" style="left:298.5px;top:295.5px;width:79.5px;height:29.0px;background:#f8e4d5;"></div>
<div class="a" style="left:378.0px;top:295.5px;width:75.0px;height:29.0px;background:#d3dcea;"></div>
<div class="a" style="left:9.0px;top:324.5px;width:289.5px;height:29.0px;background:#f5f8f1;"></div>
<div class="a" style="left:298.5px;top:324.5px;width:79.5px;height:29.0px;background:#f8e4d5;"></div>
<div class="a" style="left:378.0px;top:324.5px;width:75.0px;height:29.0px;background:#d3dcea;"></div>
<div class="a" style="left:9.0px;top:353.5px;width:289.5px;height:29.0px;background:#f5f8f1;"></div>
<div class="a" style="left:298.5px;top:353.5px;width:79.5px;height:29.0px;background:#f8e4d5;"></div>
<div class="a" style="left:378.0px;top:353.5px;width:75.0px;height:29.0px;background:#d3dcea;"></div>
<div class="a" style="left:9.0px;top:382.5px;width:289.5px;height:29.0px;background:#f5f8f1;"></div>
<div class="a" style="left:298.5px;top:382.5px;width:79.5px;height:29.0px;background:#f8e4d5;"></div>
<div class="a" style="left:378.0px;top:382.5px;width:75.0px;height:29.0px;background:#d3dcea;"></div>
<div class="a" style="left:9.0px;top:411.5px;width:289.5px;height:29.0px;background:#f5f8f1;"></div>
<div class="a" style="left:298.5px;top:411.5px;width:79.5px;height:29.0px;background:#f8e4d5;"></div>
<div class="a" style="left:378.0px;top:411.5px;width:75.0px;height:29.0px;background:#d3dcea;"></div>
<div class="a" style="left:298.0px;top:177.8px;width:155.8px;height:1.4px;background:#5a5a5a;"></div>
<div class="a" style="left:297.8px;top:177.8px;width:1.4px;height:30.7px;background:#5a5a5a;"></div>
<div class="a" style="left:377.3px;top:177.8px;width:1.4px;height:30.7px;background:#5a5a5a;"></div>
<div class="a" style="left:452.4px;top:177.8px;width:1.4px;height:30.7px;background:#5a5a5a;"></div>
<div class="a" style="left:297.8px;top:207.8px;width:156.0px;height:1.4px;background:#4e4e4e;"></div>
<div class="a" style="left:8.8px;top:236.8px;width:445.0px;height:1.4px;background:#4e4e4e;"></div>
<div class="a" style="left:8.8px;top:265.8px;width:445.0px;height:1.4px;background:#4e4e4e;"></div>
<div class="a" style="left:8.8px;top:294.8px;width:445.0px;height:1.4px;background:#4e4e4e;"></div>
<div class="a" style="left:8.8px;top:323.8px;width:445.0px;height:1.4px;background:#4e4e4e;"></div>
<div class="a" style="left:8.8px;top:352.8px;width:445.0px;height:1.4px;background:#4e4e4e;"></div>
<div class="a" style="left:8.8px;top:381.8px;width:445.0px;height:1.4px;background:#4e4e4e;"></div>
<div class="a" style="left:8.8px;top:410.8px;width:445.0px;height:1.4px;background:#4e4e4e;"></div>
<div class="a" style="left:8.8px;top:439.8px;width:445.0px;height:1.4px;background:#4e4e4e;"></div>
<div class="a" style="left:8.9px;top:207.8px;width:1.4px;height:233.4px;background:#4e4e4e;"></div>
<div class="a" style="left:297.8px;top:207.8px;width:1.4px;height:233.4px;background:#4e4e4e;"></div>
<div class="a" style="left:377.3px;top:207.8px;width:1.4px;height:233.4px;background:#4e4e4e;"></div>
<div class="a" style="left:452.4px;top:207.8px;width:1.4px;height:233.4px;background:#4e4e4e;"></div>
<div class="a t" style="left:23.0px;top:181.10px;font-size:13px;line-height:18px;color:#333;">Табл.2</div>
<div class="a t" style="left:113.0px;top:180.80px;font-size:15px;line-height:18px;font-weight:700;color:#1a1a1a;">Компонент</div>
<div class="a t" style="left:308.0px;top:186.32px;font-size:13.5px;line-height:18px;font-weight:700;color:#1a1a1a;">RI</div>
<div class="a t" style="left:382.0px;top:182.32px;font-size:13.5px;line-height:18px;font-weight:700;color:#1a1a1a;">%</div>
<div class="a t" style="left:13.0px;top:213.13px;font-size:15.5px;line-height:18px;color:#262626;">артемизия кетон</div>
<div class="a t" style="left:303.0px;top:213.20px;font-size:15.3px;line-height:18px;color:#262626;">1062</div>
<div class="a t" style="left:382.0px;top:213.20px;font-size:15.3px;line-height:18px;color:#262626;">69,2</div>
<div class="a t" style="left:13.0px;top:242.13px;font-size:15.5px;line-height:18px;color:#262626;">β-эудесмен</div>
<div class="a t" style="left:303.0px;top:242.20px;font-size:15.3px;line-height:18px;color:#262626;">1441</div>
<div class="a t" style="left:382.0px;top:242.20px;font-size:15.3px;line-height:18px;color:#262626;">14,3</div>
<div class="a t" style="left:13.0px;top:271.13px;font-size:15.5px;line-height:18px;color:#262626;">артемизиевый спирт</div>
<div class="a t" style="left:303.0px;top:271.20px;font-size:15.3px;line-height:18px;color:#262626;">352</div>
<div class="a t" style="left:382.0px;top:271.20px;font-size:15.3px;line-height:18px;color:#262626;">4,6</div>
<div class="a t" style="left:13.0px;top:300.13px;font-size:15.5px;line-height:18px;color:#262626;">артеаннуин Б</div>
<div class="a t" style="left:303.0px;top:300.20px;font-size:15.3px;line-height:18px;color:#262626;">1849</div>
<div class="a t" style="left:382.0px;top:300.20px;font-size:15.3px;line-height:18px;color:#262626;">0,6</div>
<div class="a t" style="left:13.0px;top:329.13px;font-size:15.5px;line-height:18px;color:#262626;">кариофиллен оксид</div>
<div class="a t" style="left:303.0px;top:329.20px;font-size:15.3px;line-height:18px;color:#262626;">1586</div>
<div class="a t" style="left:382.0px;top:329.20px;font-size:15.3px;line-height:18px;color:#262626;">1,5</div>
<div class="a t" style="left:13.0px;top:358.13px;font-size:15.5px;line-height:18px;color:#262626;">артеаннуиновая кислота</div>
<div class="a t" style="left:303.0px;top:358.20px;font-size:15.3px;line-height:18px;color:#262626;">1354</div>
<div class="a t" style="left:382.0px;top:358.20px;font-size:15.3px;line-height:18px;color:#262626;">1,3</div>
<div class="a t" style="left:13.0px;top:387.13px;font-size:15.5px;line-height:18px;color:#262626;">3-метилгексан</div>
<div class="a t" style="left:303.0px;top:387.20px;font-size:15.3px;line-height:18px;color:#262626;">751</div>
<div class="a t" style="left:382.0px;top:387.20px;font-size:15.3px;line-height:18px;color:#262626;">0,6</div>
<div class="a t" style="left:13.0px;top:416.13px;font-size:15.5px;line-height:18px;color:#262626;">n-гептакозан</div>
<div class="a t" style="left:303.0px;top:416.20px;font-size:15.3px;line-height:18px;color:#262626;">380</div>
<div class="a t" style="left:382.0px;top:416.20px;font-size:15.3px;line-height:18px;color:#262626;">0,2</div>
<div class="a t" style="left:-28px;top:456.92px;width:500px;text-align:center;font-size:13.5px;line-height:18px;color:#262626">Идентификация считалась успешной, когда компьютерное</div>
<div class="a t" style="left:-28px;top:473.32px;width:500px;text-align:center;font-size:13.5px;line-height:18px;color:#262626">сопоставление масс-спектров имела вероятность выше 95 %.</div>
<div class="a t" style="left:517px;top:177.00px;font-size:14.8px;line-height:18px;font-weight:700;color:#1e1e1e">Заключение</div>
<div class="a j" style="left:458.0px;top:194.82px;width:210px;font-size:13.5px;line-height:18px;color:#262626;">Таким образом, полыни</div>
<div class="a j" style="left:458.0px;top:212.82px;width:210px;font-size:13.5px;line-height:18px;color:#262626;">однолетней трава содержит</div>
<div class="a j" style="left:458.0px;top:230.82px;width:210px;font-size:13.5px;line-height:18px;color:#262626;">значительное количество</div>
<div class="a j" style="left:458.0px;top:248.82px;width:210px;font-size:13.5px;line-height:18px;color:#262626;">эфирного масла с</div>
<div class="a j" style="left:458.0px;top:266.82px;width:210px;font-size:13.5px;line-height:18px;color:#262626;">преобладанием артемизиевого</div>
<div class="a j" style="left:458.0px;top:284.82px;width:210px;font-size:13.5px;line-height:18px;color:#262626;">кетона и артеаннууиновой</div>
<div class="a j" style="left:458.0px;top:302.82px;width:210px;font-size:13.5px;line-height:18px;color:#262626;">кислоты, которые являются</div>
<div class="a t" style="left:458.0px;top:320.82px;width:210px;font-size:13.5px;line-height:18px;color:#262626;">предшественниками</div>
<div class="a j" style="left:458.0px;top:338.82px;width:210px;font-size:13.5px;line-height:18px;color:#262626;">сесквитерпеновых лактонов</div>
<div class="a t" style="left:458.0px;top:356.82px;width:210px;font-size:13.5px;line-height:18px;color:#262626;">артемизинина и артеануинна В.</div>
<div class="a t" style="left:457.0px;top:374.80px;font-size:13px;line-height:18px;font-weight:700;color:#1e1e1e;">Литература</div>
<div class="a j" style="left:458.0px;top:392.62px;width:210px;font-size:13.5px;line-height:18px;color:#262626;">1. Соктоева Т.Э.</div>
<div class="a t" style="left:458.0px;top:410.62px;width:210px;font-size:13.5px;line-height:18px;color:#262626;">Фармакогностическое</div>
<div class="a j" style="left:458.0px;top:428.62px;width:210px;font-size:13.5px;line-height:18px;color:#262626;">исследование Artemisia annua L.</div>
<div class="a j" style="left:458.0px;top:446.62px;width:210px;font-size:13.5px;line-height:18px;color:#262626;">и Artemisia severciana Willd</div>
<div class="a j" style="left:458.0px;top:464.62px;width:210px;font-size:13.5px;line-height:18px;color:#262626;">Флоры Бурятии: дис. … канд.</div>
<div class="a t" style="left:458.0px;top:482.62px;width:210px;font-size:13.5px;line-height:18px;color:#262626;">фармац. наук. Улан-Удэ, 2011.</div>
<div class="a t" style="left:678.0px;top:484.10px;font-size:13px;line-height:18px;color:#262626;">Рис.4 Эфирное масло</div>
  <!-- photo -->
  <div class="a" style="left:674px;top:173px;width:212px;height:303px;overflow:hidden;background:linear-gradient(180deg,#f8f9fa 0%,#e9ecf0 9%,#e1e4ea 30%,#e4e7ed 50%,#f0f1f4 70%,#f7f7f9 100%)">
  <div class="a" style="left:0;top:0;width:212px;height:303px;background:radial-gradient(ellipse 60% 40% at 0% 0%,rgba(255,255,255,.8),rgba(255,255,255,0)),radial-gradient(ellipse 30% 60% at 100% 30%,rgba(255,255,255,.7),rgba(255,255,255,0))"></div>
  <svg class="a" style="left:0;top:0" width="212" height="303" viewBox="0 0 212 303">
    <defs><filter id="b1" x="-10%" y="-10%" width="120%" height="120%"><feGaussianBlur stdDeviation="0.9"/></filter>
    <filter id="b2" x="-10%" y="-10%" width="120%" height="120%"><feGaussianBlur stdDeviation="0.6"/></filter></defs>
    <g filter="url(#b1)" opacity="0.9"><circle cx="97.6" cy="68.2" r="2.5" fill="#cfcc86"/><circle cx="110.1" cy="57.5" r="2.4" fill="#c2be70"/><circle cx="138.6" cy="65.4" r="1.4" fill="#cfcc86"/><circle cx="96.9" cy="60.9" r="2.4" fill="#c2be70"/><circle cx="76.0" cy="49.0" r="1.4" fill="#b8b463"/><circle cx="125.5" cy="64.8" r="2.4" fill="#c2be70"/><circle cx="101.1" cy="68.5" r="1.5" fill="#d8d59c"/><circle cx="60.9" cy="54.6" r="1.5" fill="#c2be70"/><circle cx="76.7" cy="74.3" r="1.4" fill="#cfcc86"/><circle cx="77.2" cy="51.2" r="2.3" fill="#d8d59c"/><circle cx="47.7" cy="67.3" r="2.0" fill="#c2be70"/><circle cx="118.3" cy="42.5" r="1.8" fill="#d8d59c"/><circle cx="49.2" cy="58.3" r="2.7" fill="#d8d59c"/><circle cx="97.3" cy="59.4" r="2.3" fill="#c2be70"/><circle cx="105.7" cy="55.1" r="2.2" fill="#cfcc86"/><circle cx="115.1" cy="61.0" r="2.4" fill="#d8d59c"/><circle cx="89.0" cy="72.5" r="2.2" fill="#b8b463"/><circle cx="115.7" cy="64.1" r="1.8" fill="#cfcc86"/><circle cx="149.9" cy="69.5" r="2.5" fill="#b8b463"/><circle cx="98.1" cy="75.0" r="2.6" fill="#cfcc86"/><circle cx="133.0" cy="57.4" r="2.5" fill="#b8b463"/><circle cx="153.1" cy="69.8" r="1.5" fill="#c2be70"/><circle cx="58.3" cy="76.6" r="2.2" fill="#c2be70"/><circle cx="66.3" cy="67.4" r="3.0" fill="#b8b463"/><circle cx="121.6" cy="54.0" r="2.1" fill="#d8d59c"/><circle cx="92.1" cy="49.9" r="1.7" fill="#cfcc86"/><circle cx="115.0" cy="70.4" r="1.7" fill="#b8b463"/><circle cx="114.2" cy="55.1" r="1.8" fill="#c2be70"/><circle cx="78.0" cy="68.3" r="2.4" fill="#c2be70"/><circle cx="90.8" cy="46.8" r="2.5" fill="#cfcc86"/><circle cx="50.8" cy="68.4" r="3.1" fill="#b8b463"/><circle cx="79.1" cy="70.1" r="2.2" fill="#b8b463"/><circle cx="113.7" cy="63.5" r="1.7" fill="#c2be70"/><circle cx="138.5" cy="73.6" r="1.5" fill="#c2be70"/><circle cx="46.8" cy="56.3" r="2.5" fill="#cfcc86"/><circle cx="136.0" cy="48.9" r="1.6" fill="#d8d59c"/><circle cx="146.8" cy="57.0" r="2.2" fill="#cfcc86"/><circle cx="140.9" cy="41.0" r="2.2" fill="#b8b463"/><circle cx="98.9" cy="68.2" r="2.7" fill="#d8d59c"/><circle cx="57.5" cy="64.7" r="2.3" fill="#c2be70"/><circle cx="142.8" cy="57.0" r="1.6" fill="#cfcc86"/><circle cx="106.4" cy="50.9" r="2.5" fill="#cfcc86"/><circle cx="97.0" cy="52.4" r="2.0" fill="#c2be70"/><circle cx="91.6" cy="69.2" r="2.3" fill="#d8d59c"/><circle cx="76.2" cy="48.0" r="2.8" fill="#c2be70"/><circle cx="123.6" cy="40.8" r="2.7" fill="#c2be70"/><circle cx="116.7" cy="77.1" r="2.7" fill="#cfcc86"/><circle cx="114.1" cy="47.1" r="1.7" fill="#d8d59c"/><circle cx="49.0" cy="70.1" r="3.2" fill="#d8d59c"/><circle cx="116.0" cy="64.6" r="2.2" fill="#d8d59c"/><circle cx="117.6" cy="79.9" r="3.0" fill="#cfcc86"/><circle cx="59.4" cy="64.5" r="2.8" fill="#cfcc86"/><circle cx="112.1" cy="56.9" r="2.0" fill="#c2be70"/><circle cx="86.6" cy="63.1" r="2.8" fill="#d8d59c"/><circle cx="156.0" cy="75.0" r="2.7" fill="#b8b463"/><circle cx="56.4" cy="76.5" r="2.7" fill="#c2be70"/><circle cx="110.0" cy="61.9" r="2.4" fill="#b8b463"/><circle cx="110.6" cy="55.7" r="2.9" fill="#b8b463"/><circle cx="88.6" cy="51.6" r="2.3" fill="#c2be70"/><circle cx="157.5" cy="65.0" r="2.7" fill="#cfcc86"/><circle cx="46.7" cy="57.9" r="2.1" fill="#c2be70"/><circle cx="114.6" cy="54.2" r="1.8" fill="#d8d59c"/><circle cx="53.7" cy="61.8" r="1.9" fill="#b8b463"/><circle cx="109.4" cy="58.8" r="2.7" fill="#b8b463"/><circle cx="76.9" cy="42.8" r="2.3" fill="#c2be70"/><circle cx="66.4" cy="58.7" r="1.3" fill="#b8b463"/><circle cx="112.3" cy="43.9" r="2.8" fill="#c2be70"/><circle cx="122.2" cy="75.6" r="2.7" fill="#cfcc86"/><circle cx="87.0" cy="76.6" r="2.4" fill="#cfcc86"/><circle cx="111.2" cy="59.7" r="1.7" fill="#cfcc86"/><circle cx="110.4" cy="46.0" r="2.4" fill="#cfcc86"/><circle cx="63.8" cy="68.4" r="2.3" fill="#c2be70"/><circle cx="92.5" cy="48.0" r="2.3" fill="#b8b463"/><circle cx="81.7" cy="61.5" r="2.3" fill="#d8d59c"/><circle cx="155.7" cy="50.8" r="1.7" fill="#b8b463"/><circle cx="114.2" cy="66.5" r="2.1" fill="#cfcc86"/><circle cx="88.7" cy="49.4" r="1.7" fill="#d8d59c"/><circle cx="117.2" cy="38.5" r="1.6" fill="#d8d59c"/><circle cx="140.4" cy="80.6" r="3.1" fill="#c2be70"/><circle cx="104.8" cy="57.0" r="3.0" fill="#c2be70"/><circle cx="159.4" cy="60.5" r="1.6" fill="#b8b463"/><circle cx="137.8" cy="61.5" r="2.1" fill="#d8d59c"/><circle cx="84.4" cy="80.8" r="1.3" fill="#b8b463"/><circle cx="101.5" cy="62.6" r="1.9" fill="#d8d59c"/><circle cx="95.9" cy="61.7" r="3.2" fill="#c2be70"/><circle cx="117.6" cy="61.1" r="1.8" fill="#cfcc86"/><circle cx="120.6" cy="57.6" r="2.7" fill="#b8b463"/><circle cx="132.6" cy="46.0" r="3.1" fill="#b8b463"/><circle cx="139.5" cy="81.8" r="2.4" fill="#d8d59c"/><circle cx="112.1" cy="63.9" r="2.6" fill="#b8b463"/><circle cx="124.6" cy="55.7" r="1.3" fill="#cfcc86"/><circle cx="108.5" cy="57.7" r="2.9" fill="#cfcc86"/><circle cx="103.7" cy="67.9" r="1.3" fill="#b8b463"/><circle cx="127.1" cy="57.4" r="1.5" fill="#c2be70"/><circle cx="161.1" cy="52.4" r="1.8" fill="#c2be70"/><circle cx="113.2" cy="73.0" r="1.9" fill="#c2be70"/><circle cx="95.5" cy="77.5" r="1.6" fill="#d8d59c"/><circle cx="125.4" cy="37.6" r="1.4" fill="#cfcc86"/><circle cx="100.7" cy="45.0" r="1.7" fill="#b8b463"/><circle cx="106.0" cy="76.8" r="2.6" fill="#b8b463"/><circle cx="82.5" cy="47.8" r="3.0" fill="#d8d59c"/><circle cx="81.7" cy="38.3" r="2.0" fill="#c2be70"/><circle cx="80.6" cy="69.0" r="1.4" fill="#c2be70"/><circle cx="149.5" cy="63.7" r="3.0" fill="#b8b463"/><circle cx="110.7" cy="65.9" r="2.9" fill="#d8d59c"/><circle cx="66.0" cy="50.3" r="1.4" fill="#c2be70"/><circle cx="124.3" cy="74.3" r="1.8" fill="#d8d59c"/><circle cx="145.0" cy="59.1" r="1.8" fill="#d8d59c"/><circle cx="108.8" cy="69.8" r="1.9" fill="#cfcc86"/><circle cx="67.2" cy="64.5" r="1.7" fill="#cfcc86"/><circle cx="150.3" cy="74.2" r="1.6" fill="#cfcc86"/><circle cx="84.0" cy="68.9" r="2.5" fill="#cfcc86"/><circle cx="70.9" cy="53.5" r="2.7" fill="#b8b463"/><circle cx="109.4" cy="41.4" r="2.2" fill="#d8d59c"/><circle cx="97.6" cy="43.2" r="1.4" fill="#b8b463"/><circle cx="99.6" cy="39.6" r="1.6" fill="#cfcc86"/><circle cx="124.7" cy="46.2" r="3.0" fill="#c2be70"/><circle cx="110.8" cy="63.4" r="2.5" fill="#cfcc86"/><circle cx="79.6" cy="72.4" r="1.4" fill="#cfcc86"/><circle cx="71.8" cy="47.8" r="2.2" fill="#cfcc86"/><circle cx="95.7" cy="63.1" r="3.1" fill="#cfcc86"/><circle cx="100.0" cy="58.7" r="2.7" fill="#d8d59c"/><circle cx="125.1" cy="40.5" r="1.7" fill="#c2be70"/><circle cx="110.5" cy="81.1" r="2.2" fill="#b8b463"/><circle cx="156.4" cy="73.3" r="1.8" fill="#cfcc86"/><circle cx="71.2" cy="49.2" r="1.4" fill="#c2be70"/><circle cx="82.4" cy="78.8" r="2.6" fill="#c2be70"/><circle cx="113.7" cy="62.3" r="1.8" fill="#cfcc86"/><circle cx="88.3" cy="43.5" r="1.9" fill="#d8d59c"/><circle cx="69.5" cy="65.4" r="1.5" fill="#c2be70"/><circle cx="100.8" cy="66.3" r="2.2" fill="#d8d59c"/><circle cx="52.8" cy="67.8" r="3.1" fill="#b8b463"/><circle cx="136.9" cy="61.5" r="3.0" fill="#c2be70"/><circle cx="115.3" cy="64.2" r="2.7" fill="#d8d59c"/><circle cx="119.4" cy="60.2" r="2.9" fill="#d8d59c"/><circle cx="141.7" cy="48.7" r="1.7" fill="#b8b463"/><circle cx="91.5" cy="66.4" r="3.1" fill="#b8b463"/><circle cx="63.9" cy="73.6" r="2.1" fill="#b8b463"/><circle cx="82.9" cy="83.1" r="1.3" fill="#d8d59c"/><circle cx="112.5" cy="57.0" r="3.1" fill="#cfcc86"/><circle cx="126.2" cy="55.7" r="2.0" fill="#b8b463"/><circle cx="61.6" cy="77.0" r="1.4" fill="#b8b463"/><circle cx="107.0" cy="38.7" r="1.8" fill="#cfcc86"/><circle cx="118.1" cy="52.7" r="3.1" fill="#c2be70"/><circle cx="139.1" cy="59.4" r="1.9" fill="#d8d59c"/><circle cx="112.5" cy="48.0" r="1.4" fill="#b8b463"/><circle cx="155.8" cy="49.1" r="2.3" fill="#cfcc86"/><circle cx="152.5" cy="68.4" r="2.2" fill="#c2be70"/><circle cx="89.1" cy="53.5" r="1.4" fill="#c2be70"/><circle cx="121.0" cy="74.3" r="1.8" fill="#d8d59c"/><circle cx="100.8" cy="36.5" r="1.8" fill="#c2be70"/><circle cx="92.1" cy="78.4" r="2.0" fill="#c2be70"/><circle cx="98.7" cy="58.7" r="2.3" fill="#b8b463"/><circle cx="71.2" cy="57.4" r="1.9" fill="#b8b463"/><circle cx="68.5" cy="69.5" r="1.8" fill="#c2be70"/><circle cx="98.7" cy="66.1" r="1.8" fill="#d8d59c"/><circle cx="112.4" cy="54.1" r="1.3" fill="#b8b463"/><circle cx="67.6" cy="76.2" r="1.7" fill="#d8d59c"/><circle cx="100.3" cy="65.2" r="1.8" fill="#d8d59c"/><circle cx="132.0" cy="73.4" r="2.5" fill="#c2be70"/><circle cx="153.0" cy="75.2" r="2.0" fill="#b8b463"/><circle cx="80.0" cy="66.8" r="2.8" fill="#cfcc86"/><circle cx="128.8" cy="72.2" r="2.8" fill="#b8b463"/><circle cx="141.9" cy="58.9" r="1.4" fill="#b8b463"/><circle cx="128.0" cy="60.3" r="1.5" fill="#c2be70"/><circle cx="140.1" cy="82.8" r="1.5" fill="#b8b463"/><circle cx="149.7" cy="73.1" r="1.3" fill="#c2be70"/><circle cx="111.4" cy="86.4" r="2.5" fill="#d8d59c"/><circle cx="148.5" cy="57.6" r="2.3" fill="#b8b463"/><circle cx="100.7" cy="56.7" r="1.4" fill="#c2be70"/><circle cx="89.3" cy="72.1" r="2.8" fill="#cfcc86"/><circle cx="61.2" cy="63.8" r="2.2" fill="#d8d59c"/><circle cx="77.4" cy="55.0" r="2.6" fill="#c2be70"/><circle cx="96.8" cy="67.6" r="2.4" fill="#d8d59c"/><circle cx="111.9" cy="69.9" r="3.4" fill="#b8b463"/><circle cx="112.4" cy="71.1" r="2.4" fill="#d8d59c"/><circle cx="100.5" cy="69.7" r="2.3" fill="#b8b463"/><circle cx="86.4" cy="75.2" r="1.6" fill="#d8d59c"/><circle cx="98.3" cy="56.9" r="2.0" fill="#c2be70"/><circle cx="86.8" cy="82.5" r="2.1" fill="#c2be70"/><circle cx="96.5" cy="84.5" r="1.8" fill="#b8b463"/><circle cx="71.5" cy="57.4" r="2.6" fill="#cfcc86"/><circle cx="109.9" cy="66.5" r="2.4" fill="#c2be70"/><circle cx="127.5" cy="69.9" r="2.4" fill="#cfcc86"/><circle cx="109.2" cy="77.4" r="3.0" fill="#d8d59c"/><circle cx="95.7" cy="50.1" r="3.5" fill="#d8d59c"/><circle cx="110.8" cy="80.4" r="2.6" fill="#b8b463"/><circle cx="129.4" cy="70.7" r="2.4" fill="#d8d59c"/><circle cx="122.5" cy="67.0" r="1.8" fill="#cfcc86"/><circle cx="96.4" cy="76.5" r="3.5" fill="#cfcc86"/><circle cx="69.4" cy="62.4" r="2.4" fill="#d8d59c"/><circle cx="109.7" cy="59.0" r="1.7" fill="#b8b463"/><circle cx="108.7" cy="79.0" r="2.5" fill="#d8d59c"/><circle cx="75.6" cy="80.6" r="1.7" fill="#b8b463"/><circle cx="100.4" cy="81.0" r="2.4" fill="#b8b463"/><circle cx="105.6" cy="68.6" r="3.4" fill="#d8d59c"/><circle cx="102.0" cy="70.4" r="2.8" fill="#d8d59c"/><circle cx="94.6" cy="85.3" r="2.8" fill="#d8d59c"/><circle cx="99.3" cy="54.1" r="3.4" fill="#d8d59c"/><circle cx="132.9" cy="68.4" r="3.4" fill="#cfcc86"/><circle cx="114.3" cy="69.0" r="2.6" fill="#b8b463"/><circle cx="119.7" cy="65.4" r="2.1" fill="#b8b463"/><circle cx="103.9" cy="64.0" r="2.6" fill="#cfcc86"/><circle cx="110.5" cy="54.2" r="3.2" fill="#c2be70"/><circle cx="85.7" cy="62.9" r="2.2" fill="#d8d59c"/><circle cx="105.9" cy="55.8" r="2.6" fill="#b8b463"/><circle cx="100.3" cy="61.2" r="1.7" fill="#cfcc86"/><circle cx="74.0" cy="69.4" r="1.9" fill="#b8b463"/><circle cx="129.5" cy="56.1" r="2.1" fill="#cfcc86"/><circle cx="105.6" cy="77.5" r="3.6" fill="#b8b463"/><circle cx="104.5" cy="71.9" r="2.5" fill="#c2be70"/><circle cx="99.5" cy="52.0" r="2.9" fill="#cfcc86"/><circle cx="103.2" cy="60.5" r="2.2" fill="#d8d59c"/><circle cx="77.4" cy="78.4" r="2.0" fill="#c2be70"/><circle cx="105.7" cy="74.0" r="2.2" fill="#c2be70"/><circle cx="90.3" cy="76.4" r="3.6" fill="#c2be70"/><circle cx="95.3" cy="65.1" r="2.5" fill="#cfcc86"/><circle cx="119.0" cy="74.4" r="3.2" fill="#b8b463"/><circle cx="103.6" cy="67.0" r="2.2" fill="#cfcc86"/><circle cx="126.6" cy="71.9" r="3.3" fill="#c2be70"/><circle cx="118.1" cy="64.2" r="3.3" fill="#b8b463"/><circle cx="73.3" cy="58.9" r="2.9" fill="#cfcc86"/><circle cx="121.9" cy="75.7" r="2.8" fill="#c2be70"/><circle cx="118.3" cy="70.0" r="1.7" fill="#d8d59c"/><circle cx="131.2" cy="71.4" r="3.4" fill="#cfcc86"/><circle cx="109.0" cy="59.3" r="2.3" fill="#d8d59c"/><circle cx="103.1" cy="68.8" r="2.6" fill="#b8b463"/><circle cx="107.4" cy="69.4" r="2.4" fill="#c2be70"/><circle cx="95.2" cy="65.4" r="1.9" fill="#d8d59c"/><circle cx="86.0" cy="72.0" r="2.2" fill="#cfcc86"/><circle cx="89.7" cy="79.2" r="2.3" fill="#b8b463"/><circle cx="133.0" cy="69.7" r="3.2" fill="#c2be70"/><circle cx="83.6" cy="74.1" r="3.5" fill="#b8b463"/><circle cx="117.9" cy="62.3" r="3.2" fill="#b8b463"/><circle cx="82.6" cy="63.8" r="3.1" fill="#c2be70"/><circle cx="126.3" cy="69.1" r="2.9" fill="#b8b463"/><circle cx="124.3" cy="74.9" r="2.3" fill="#c2be70"/><circle cx="110.1" cy="73.9" r="2.6" fill="#cfcc86"/><circle cx="118.8" cy="74.9" r="3.2" fill="#c2be70"/><circle cx="88.7" cy="83.1" r="1.7" fill="#b8b463"/><circle cx="88.9" cy="79.7" r="2.9" fill="#cfcc86"/><circle cx="123.6" cy="60.7" r="3.2" fill="#c2be70"/><circle cx="77.2" cy="55.5" r="2.8" fill="#c2be70"/><circle cx="105.8" cy="63.2" r="2.0" fill="#b8b463"/><circle cx="110.1" cy="66.1" r="2.3" fill="#c2be70"/><circle cx="100.6" cy="82.4" r="3.4" fill="#cfcc86"/><circle cx="126.4" cy="57.4" r="2.9" fill="#d8d59c"/><circle cx="120.7" cy="76.5" r="2.7" fill="#d8d59c"/><circle cx="89.6" cy="61.6" r="2.1" fill="#b8b463"/><circle cx="87.7" cy="59.4" r="2.5" fill="#cfcc86"/><circle cx="139.6" cy="68.4" r="2.5" fill="#b8b463"/><circle cx="102.9" cy="52.9" r="2.5" fill="#c2be70"/><circle cx="107.8" cy="59.2" r="1.7" fill="#d8d59c"/><circle cx="93.2" cy="69.4" r="2.5" fill="#cfcc86"/><circle cx="109.3" cy="69.1" r="3.4" fill="#d8d59c"/><circle cx="104.3" cy="56.9" r="1.7" fill="#b8b463"/><circle cx="80.6" cy="55.6" r="1.7" fill="#cfcc86"/><circle cx="132.1" cy="67.6" r="3.2" fill="#c2be70"/><circle cx="124.9" cy="80.2" r="2.2" fill="#c2be70"/><circle cx="87.6" cy="54.8" r="2.0" fill="#d8d59c"/><circle cx="88.3" cy="63.6" r="2.2" fill="#d8d59c"/><circle cx="119.1" cy="62.2" r="2.1" fill="#b8b463"/><circle cx="104.1" cy="74.8" r="2.6" fill="#d8d59c"/><circle cx="91.0" cy="72.2" r="2.4" fill="#d8d59c"/><circle cx="84.2" cy="52.9" r="1.9" fill="#d8d59c"/><circle cx="119.2" cy="75.6" r="2.9" fill="#d8d59c"/><circle cx="122.5" cy="65.8" r="2.6" fill="#cfcc86"/><circle cx="99.7" cy="79.6" r="3.3" fill="#d8d59c"/><circle cx="96.3" cy="85.8" r="2.8" fill="#d8d59c"/><circle cx="96.6" cy="70.7" r="2.1" fill="#cfcc86"/><circle cx="92.8" cy="78.9" r="2.2" fill="#d8d59c"/><circle cx="96.5" cy="53.4" r="2.0" fill="#d8d59c"/><circle cx="83.4" cy="61.3" r="2.6" fill="#cfcc86"/><circle cx="109.6" cy="72.7" r="2.9" fill="#cfcc86"/><circle cx="125.3" cy="72.1" r="2.2" fill="#d8d59c"/><circle cx="78.9" cy="65.9" r="2.2" fill="#c2be70"/><circle cx="108.2" cy="80.4" r="2.5" fill="#c2be70"/><circle cx="134.1" cy="69.4" r="3.0" fill="#b8b463"/><circle cx="124.1" cy="75.4" r="3.3" fill="#d8d59c"/><circle cx="87.1" cy="72.1" r="1.6" fill="#d8d59c"/><circle cx="93.1" cy="76.2" r="2.4" fill="#b8b463"/><circle cx="110.3" cy="89.3" r="1.6" fill="#cfcc86"/><circle cx="100.9" cy="82.0" r="1.6" fill="#cfcc86"/><circle cx="129.7" cy="80.5" r="2.9" fill="#c2be70"/><circle cx="93.8" cy="83.3" r="2.5" fill="#b8b463"/><circle cx="113.4" cy="77.3" r="2.0" fill="#d8d59c"/><circle cx="89.0" cy="72.9" r="2.6" fill="#b8b463"/><circle cx="109.8" cy="79.7" r="2.8" fill="#b8b463"/><circle cx="129.5" cy="83.6" r="1.8" fill="#cfcc86"/><circle cx="108.4" cy="87.3" r="1.7" fill="#d8d59c"/><circle cx="107.2" cy="76.2" r="2.3" fill="#b8b463"/><circle cx="98.9" cy="71.3" r="3.0" fill="#d8d59c"/><circle cx="91.6" cy="72.4" r="1.8" fill="#cfcc86"/><circle cx="123.5" cy="88.2" r="2.8" fill="#c2be70"/><circle cx="133.0" cy="77.2" r="2.0" fill="#b8b463"/><circle cx="104.8" cy="83.2" r="2.9" fill="#b8b463"/><circle cx="91.0" cy="81.1" r="1.5" fill="#cfcc86"/><circle cx="87.9" cy="83.1" r="2.4" fill="#d8d59c"/><circle cx="113.8" cy="75.0" r="2.4" fill="#c2be70"/><circle cx="111.5" cy="80.6" r="1.7" fill="#c2be70"/><circle cx="105.7" cy="82.1" r="1.5" fill="#cfcc86"/><circle cx="124.2" cy="85.6" r="1.6" fill="#cfcc86"/><circle cx="109.6" cy="78.5" r="2.4" fill="#d8d59c"/><circle cx="119.1" cy="89.2" r="2.3" fill="#cfcc86"/><circle cx="127.9" cy="74.4" r="2.6" fill="#b8b463"/><circle cx="117.8" cy="82.1" r="1.7" fill="#cfcc86"/><circle cx="136.7" cy="77.1" r="2.6" fill="#cfcc86"/><circle cx="119.9" cy="73.5" r="1.9" fill="#cfcc86"/><circle cx="127.1" cy="86.3" r="2.5" fill="#d8d59c"/><circle cx="103.1" cy="85.0" r="1.5" fill="#d8d59c"/><circle cx="113.3" cy="79.5" r="2.6" fill="#d8d59c"/><circle cx="112.5" cy="73.0" r="2.2" fill="#d8d59c"/><circle cx="108.1" cy="79.4" r="2.1" fill="#b8b463"/><circle cx="104.1" cy="79.8" r="2.2" fill="#cfcc86"/><circle cx="100.0" cy="79.2" r="2.8" fill="#cfcc86"/><circle cx="98.8" cy="78.1" r="2.2" fill="#c2be70"/><circle cx="104.1" cy="87.9" r="1.6" fill="#d8d59c"/><circle cx="91.8" cy="80.4" r="2.7" fill="#c2be70"/><circle cx="130.4" cy="78.6" r="2.9" fill="#d8d59c"/><circle cx="102.7" cy="78.7" r="2.7" fill="#c2be70"/><circle cx="40.3" cy="85.0" r="1.8" fill="#cfcc86"/><circle cx="23.2" cy="85.7" r="1.7" fill="#cfcc86"/><circle cx="37.6" cy="80.8" r="1.5" fill="#b8b463"/><circle cx="58.9" cy="78.9" r="1.5" fill="#cfcc86"/><circle cx="38.4" cy="88.7" r="1.5" fill="#c2be70"/><circle cx="30.3" cy="92.6" r="1.3" fill="#b8b463"/><circle cx="55.7" cy="91.0" r="1.8" fill="#cfcc86"/><circle cx="39.2" cy="89.5" r="1.2" fill="#b8b463"/><circle cx="35.6" cy="76.7" r="1.2" fill="#b8b463"/><circle cx="41.8" cy="80.7" r="1.3" fill="#d8d59c"/><circle cx="25.4" cy="87.6" r="1.3" fill="#c2be70"/><circle cx="43.0" cy="94.8" r="2.0" fill="#c2be70"/><circle cx="41.4" cy="73.4" r="1.9" fill="#d8d59c"/><circle cx="50.4" cy="89.7" r="1.2" fill="#cfcc86"/><circle cx="53.4" cy="92.7" r="1.2" fill="#c2be70"/><circle cx="63.6" cy="84.0" r="1.9" fill="#b8b463"/><circle cx="44.3" cy="87.5" r="2.1" fill="#d8d59c"/><circle cx="48.1" cy="91.0" r="1.0" fill="#b8b463"/><circle cx="158.5" cy="38.3" r="1.3" fill="#d8d59c"/><circle cx="143.8" cy="45.9" r="1.8" fill="#b8b463"/><circle cx="159.3" cy="45.2" r="2.2" fill="#b8b463"/><circle cx="160.7" cy="35.7" r="1.9" fill="#c2be70"/><circle cx="142.2" cy="35.1" r="1.6" fill="#d8d59c"/><circle cx="148.8" cy="56.7" r="2.3" fill="#c2be70"/><circle cx="154.0" cy="33.4" r="1.9" fill="#d8d59c"/><circle cx="158.8" cy="37.7" r="1.0" fill="#b8b463"/><circle cx="131.4" cy="43.7" r="2.2" fill="#d8d59c"/><circle cx="152.3" cy="37.4" r="1.7" fill="#cfcc86"/><circle cx="165.8" cy="47.3" r="1.2" fill="#c2be70"/><circle cx="145.0" cy="44.6" r="1.8" fill="#c2be70"/><circle cx="146.8" cy="35.8" r="1.9" fill="#d8d59c"/><circle cx="136.7" cy="43.9" r="2.3" fill="#c2be70"/><circle cx="157.6" cy="44.7" r="1.7" fill="#cfcc86"/><circle cx="147.7" cy="34.4" r="1.9" fill="#d8d59c"/><circle cx="148.0" cy="52.8" r="1.0" fill="#b8b463"/><circle cx="165.6" cy="39.5" r="1.9" fill="#d8d59c"/><circle cx="158.4" cy="49.1" r="1.6" fill="#c2be70"/><circle cx="174.3" cy="44.5" r="1.6" fill="#c2be70"/><circle cx="164.4" cy="54.1" r="2.1" fill="#c2be70"/><circle cx="133.6" cy="46.9" r="1.3" fill="#c2be70"/><circle cx="139.0" cy="53.7" r="2.1" fill="#b8b463"/><circle cx="139.6" cy="46.3" r="1.8" fill="#c2be70"/><circle cx="152.7" cy="36.3" r="2.1" fill="#c2be70"/></g>
    <g filter="url(#b2)">
      <!-- back boxes -->
      <rect x="105" y="90" width="42" height="64" fill="#dcc59b"/><rect x="147" y="90" width="43" height="64" fill="#d9c195"/>
      <rect x="105" y="90" width="85" height="5" fill="#5f8a4a"/>
      <rect x="108" y="96" width="36" height="14" fill="#2a3552"/><rect x="150" y="96" width="37" height="14" fill="#2a3552"/>
      <rect x="105" y="95" width="3" height="59" fill="#4f7f45"/><rect x="146" y="95" width="3" height="59" fill="#4f7f45"/>
      <rect x="186" y="95" width="4" height="59" fill="#4f7f45"/>
      <!-- small bottles -->
      <rect x="132" y="121" width="24" height="30" fill="#2a3350"/><rect x="132" y="150" width="24" height="21" fill="#e0cfb0"/>
      <rect x="174" y="121" width="22" height="30" fill="#2a3350"/><rect x="174" y="150" width="22" height="20" fill="#e0cfb0"/>
      <!-- big box -->
      <rect x="5" y="86" width="88" height="136" fill="#2f6a45"/>
      <rect x="5" y="86" width="88" height="12" fill="#c9b37a"/>
      <rect x="5" y="98" width="88" height="30" fill="#273253"/>
      <circle cx="22" cy="113" r="9" fill="#c9b37a"/><rect x="17" y="108" width="10" height="10" fill="#273253"/>
      <rect x="33" y="104" width="50" height="3" fill="#8a8fa8" opacity=".6"/><rect x="33" y="110" width="45" height="2" fill="#8a8fa8" opacity=".5"/>
      <rect x="17" y="133" width="60" height="75" fill="#e6d3ad"/>
      <rect x="17" y="208" width="60" height="14" fill="#2c4d5a"/>
      <rect x="5" y="128" width="12" height="94" fill="#31704a"/>
      <!-- front bottle -->
      <rect x="80" y="144" width="49" height="37" rx="3" fill="#1f2a50"/>
      <rect x="80" y="147" width="49" height="34" fill="url(#rib)" opacity=".45"/>
      <rect x="80" y="181" width="49" height="28" fill="#2b3454"/>
      <circle cx="104" cy="197" r="6" fill="#c8b27a"/><circle cx="104" cy="197" r="4" fill="#2b3454"/>
      <rect x="80" y="210" width="49" height="28" fill="#d9c9a8"/>
      <rect x="86" y="214" width="36" height="3" fill="#6a6a6a" opacity=".5"/>
    </g>
    <defs><pattern id="rib" width="3" height="40" patternUnits="userSpaceOnUse"><rect width="1.2" height="40" fill="#4a5880"/></pattern></defs>
    <g filter="url(#b1)"><circle cx="42.2" cy="276.1" r="3.1" fill="#b2ad5c"/><circle cx="32.0" cy="232.3" r="4.7" fill="#dfdca6"/><circle cx="21.7" cy="279.3" r="3.3" fill="#b2ad5c"/><circle cx="12.1" cy="268.3" r="4.2" fill="#dfdca6"/><circle cx="57.4" cy="269.9" r="3.5" fill="#d3d08a"/><circle cx="66.9" cy="220.4" r="4.6" fill="#c2be6e"/><circle cx="21.7" cy="251.2" r="4.0" fill="#dbd89c"/><circle cx="93.2" cy="257.9" r="4.2" fill="#dfdca6"/><circle cx="18.5" cy="237.0" r="4.8" fill="#c2be6e"/><circle cx="48.9" cy="235.3" r="2.8" fill="#b2ad5c"/><circle cx="48.7" cy="243.4" r="4.9" fill="#cbc77a"/><circle cx="54.2" cy="253.9" r="4.9" fill="#cbc77a"/><circle cx="55.5" cy="218.9" r="3.0" fill="#dbd89c"/><circle cx="46.9" cy="261.9" r="4.7" fill="#dbd89c"/><circle cx="69.5" cy="236.3" r="3.1" fill="#c2be6e"/><circle cx="58.8" cy="233.0" r="4.0" fill="#b2ad5c"/><circle cx="32.4" cy="257.2" r="3.8" fill="#b2ad5c"/><circle cx="62.9" cy="280.2" r="4.5" fill="#c2be6e"/><circle cx="60.9" cy="234.2" r="4.0" fill="#dbd89c"/><circle cx="36.5" cy="278.5" r="3.6" fill="#dbd89c"/><circle cx="77.5" cy="269.0" r="4.2" fill="#d3d08a"/><circle cx="50.7" cy="255.6" r="4.5" fill="#dfdca6"/><circle cx="48.4" cy="247.5" r="3.8" fill="#c2be6e"/><circle cx="83.8" cy="262.0" r="4.2" fill="#dfdca6"/><circle cx="76.0" cy="272.5" r="3.4" fill="#cbc77a"/><circle cx="0.8" cy="241.9" r="3.2" fill="#dfdca6"/><circle cx="15.8" cy="268.0" r="4.7" fill="#dfdca6"/><circle cx="26.3" cy="275.2" r="3.3" fill="#dfdca6"/><circle cx="61.6" cy="240.7" r="3.0" fill="#b2ad5c"/><circle cx="51.0" cy="236.3" r="3.3" fill="#dfdca6"/><circle cx="79.1" cy="284.6" r="2.6" fill="#d3d08a"/><circle cx="18.4" cy="271.5" r="3.5" fill="#cbc77a"/><circle cx="65.5" cy="260.6" r="2.4" fill="#c2be6e"/><circle cx="58.0" cy="232.6" r="4.5" fill="#d3d08a"/><circle cx="56.4" cy="216.9" r="4.1" fill="#cbc77a"/><circle cx="67.9" cy="280.4" r="4.3" fill="#dbd89c"/><circle cx="49.5" cy="257.2" r="4.2" fill="#dbd89c"/><circle cx="45.8" cy="246.6" r="2.9" fill="#d3d08a"/><circle cx="36.2" cy="259.0" r="5.0" fill="#d3d08a"/><circle cx="15.4" cy="281.9" r="4.6" fill="#cbc77a"/><circle cx="33.8" cy="218.3" r="2.9" fill="#d3d08a"/><circle cx="33.4" cy="276.2" r="4.2" fill="#d3d08a"/><circle cx="13.3" cy="255.4" r="4.7" fill="#b2ad5c"/><circle cx="3.1" cy="237.0" r="3.7" fill="#d3d08a"/><circle cx="30.2" cy="228.6" r="5.2" fill="#dbd89c"/><circle cx="74.5" cy="252.0" r="3.6" fill="#d3d08a"/><circle cx="70.6" cy="267.4" r="4.9" fill="#dbd89c"/><circle cx="46.2" cy="255.1" r="4.3" fill="#d3d08a"/><circle cx="89.8" cy="251.8" r="3.0" fill="#d3d08a"/><circle cx="47.1" cy="256.8" r="4.4" fill="#c2be6e"/><circle cx="6.3" cy="265.4" r="5.0" fill="#dfdca6"/><circle cx="50.9" cy="222.2" r="4.8" fill="#dbd89c"/><circle cx="46.2" cy="237.2" r="4.0" fill="#b2ad5c"/><circle cx="-1.2" cy="264.8" r="3.1" fill="#d3d08a"/><circle cx="44.6" cy="253.2" r="2.4" fill="#dbd89c"/><circle cx="31.2" cy="227.4" r="3.5" fill="#dfdca6"/><circle cx="43.2" cy="243.2" r="4.8" fill="#b2ad5c"/><circle cx="27.7" cy="243.1" r="5.1" fill="#dbd89c"/><circle cx="9.7" cy="267.0" r="2.8" fill="#d3d08a"/><circle cx="21.0" cy="278.4" r="4.2" fill="#b2ad5c"/><circle cx="3.5" cy="260.1" r="3.7" fill="#dfdca6"/><circle cx="52.3" cy="227.4" r="3.2" fill="#d3d08a"/><circle cx="18.3" cy="233.5" r="4.6" fill="#cbc77a"/><circle cx="27.6" cy="280.7" r="5.1" fill="#c2be6e"/><circle cx="27.3" cy="244.1" r="3.6" fill="#c2be6e"/><circle cx="17.6" cy="277.5" r="4.1" fill="#c2be6e"/><circle cx="52.3" cy="238.7" r="2.4" fill="#dfdca6"/><circle cx="43.5" cy="266.4" r="5.0" fill="#d3d08a"/><circle cx="42.0" cy="265.3" r="4.9" fill="#cbc77a"/><circle cx="74.6" cy="287.9" r="4.6" fill="#cbc77a"/><circle cx="26.3" cy="218.8" r="3.4" fill="#d3d08a"/><circle cx="15.8" cy="248.7" r="3.5" fill="#dbd89c"/><circle cx="61.5" cy="248.7" r="4.1" fill="#dbd89c"/><circle cx="13.9" cy="275.1" r="5.0" fill="#cbc77a"/><circle cx="45.3" cy="219.3" r="3.7" fill="#d3d08a"/><circle cx="21.4" cy="250.4" r="2.6" fill="#b2ad5c"/><circle cx="4.3" cy="236.3" r="4.9" fill="#cbc77a"/><circle cx="31.6" cy="278.5" r="3.0" fill="#c2be6e"/><circle cx="50.4" cy="266.9" r="4.4" fill="#dfdca6"/><circle cx="23.5" cy="245.4" r="4.6" fill="#c2be6e"/><circle cx="46.1" cy="294.7" r="3.8" fill="#d3d08a"/><circle cx="24.8" cy="272.7" r="2.6" fill="#dfdca6"/><circle cx="25.6" cy="243.6" r="3.9" fill="#d3d08a"/><circle cx="58.7" cy="262.7" r="4.8" fill="#cbc77a"/><circle cx="11.5" cy="257.4" r="3.1" fill="#dfdca6"/><circle cx="2.0" cy="273.1" r="4.5" fill="#cbc77a"/><circle cx="63.7" cy="251.3" r="2.5" fill="#c2be6e"/><circle cx="70.3" cy="254.3" r="2.5" fill="#d3d08a"/><circle cx="2.5" cy="241.6" r="3.7" fill="#d3d08a"/><circle cx="68.8" cy="231.7" r="5.0" fill="#dbd89c"/><circle cx="63.7" cy="250.9" r="4.0" fill="#dbd89c"/><circle cx="84.9" cy="276.2" r="3.8" fill="#c2be6e"/><circle cx="31.9" cy="258.7" r="5.1" fill="#dbd89c"/><circle cx="45.9" cy="259.2" r="3.1" fill="#dfdca6"/><circle cx="75.8" cy="265.1" r="2.5" fill="#d3d08a"/><circle cx="43.4" cy="281.3" r="4.5" fill="#b2ad5c"/><circle cx="57.1" cy="258.7" r="4.5" fill="#c2be6e"/><circle cx="35.5" cy="238.8" r="4.1" fill="#dbd89c"/><circle cx="62.9" cy="266.7" r="3.1" fill="#d3d08a"/><circle cx="27.1" cy="270.1" r="3.6" fill="#c2be6e"/><circle cx="84.6" cy="235.1" r="3.7" fill="#c2be6e"/><circle cx="49.1" cy="244.0" r="4.7" fill="#d3d08a"/><circle cx="86.4" cy="239.7" r="4.9" fill="#c2be6e"/><circle cx="53.6" cy="214.9" r="5.0" fill="#b2ad5c"/><circle cx="64.8" cy="229.6" r="3.7" fill="#dfdca6"/><circle cx="37.0" cy="268.6" r="2.7" fill="#dfdca6"/><circle cx="55.9" cy="266.4" r="2.6" fill="#dbd89c"/><circle cx="1.1" cy="266.6" r="3.6" fill="#c2be6e"/><circle cx="42.2" cy="277.4" r="2.8" fill="#dfdca6"/><circle cx="25.7" cy="247.3" r="4.7" fill="#dfdca6"/><circle cx="92.1" cy="232.8" r="4.7" fill="#d3d08a"/><circle cx="124.3" cy="247.5" r="4.0" fill="#dbd89c"/><circle cx="133.8" cy="223.0" r="4.6" fill="#d3d08a"/><circle cx="109.4" cy="241.8" r="3.3" fill="#dfdca6"/><circle cx="147.9" cy="231.7" r="2.7" fill="#dfdca6"/><circle cx="100.3" cy="236.2" r="4.6" fill="#dfdca6"/><circle cx="128.0" cy="249.3" r="3.5" fill="#cbc77a"/><circle cx="104.5" cy="238.4" r="2.4" fill="#cbc77a"/><circle cx="105.6" cy="246.3" r="2.5" fill="#b2ad5c"/><circle cx="115.4" cy="251.9" r="2.8" fill="#c2be6e"/><circle cx="95.8" cy="230.5" r="2.9" fill="#cbc77a"/><circle cx="116.4" cy="234.6" r="4.0" fill="#b2ad5c"/><circle cx="110.8" cy="223.2" r="2.8" fill="#dbd89c"/><circle cx="100.9" cy="207.0" r="3.9" fill="#c2be6e"/><circle cx="140.9" cy="233.5" r="3.8" fill="#dbd89c"/><circle cx="131.8" cy="222.5" r="3.3" fill="#dfdca6"/><circle cx="129.7" cy="209.3" r="3.7" fill="#d3d08a"/><circle cx="82.1" cy="245.4" r="2.7" fill="#dbd89c"/><circle cx="108.7" cy="241.2" r="4.6" fill="#dfdca6"/><circle cx="140.4" cy="237.3" r="3.9" fill="#d3d08a"/><circle cx="86.4" cy="254.4" r="4.9" fill="#d3d08a"/><circle cx="132.9" cy="248.3" r="4.5" fill="#dfdca6"/><circle cx="116.6" cy="205.3" r="3.9" fill="#d3d08a"/><circle cx="107.8" cy="238.1" r="4.3" fill="#b2ad5c"/><circle cx="84.4" cy="230.4" r="3.8" fill="#d3d08a"/><circle cx="110.3" cy="237.5" r="4.0" fill="#c2be6e"/><circle cx="122.1" cy="238.8" r="4.5" fill="#d3d08a"/><circle cx="147.6" cy="235.5" r="4.3" fill="#dfdca6"/><circle cx="137.8" cy="234.3" r="3.9" fill="#cbc77a"/><circle cx="111.7" cy="249.0" r="3.3" fill="#d3d08a"/><circle cx="109.1" cy="228.6" r="2.7" fill="#b2ad5c"/><circle cx="81.6" cy="219.3" r="2.7" fill="#d3d08a"/><circle cx="101.8" cy="236.2" r="3.9" fill="#c2be6e"/><circle cx="126.3" cy="248.2" r="4.3" fill="#c2be6e"/><circle cx="112.3" cy="231.4" r="4.1" fill="#dbd89c"/><circle cx="78.9" cy="244.7" r="3.8" fill="#b2ad5c"/><circle cx="115.0" cy="231.3" r="3.3" fill="#b2ad5c"/><circle cx="111.1" cy="245.9" r="3.5" fill="#cbc77a"/><circle cx="122.6" cy="205.5" r="4.5" fill="#cbc77a"/><circle cx="133.8" cy="238.2" r="4.9" fill="#dfdca6"/><circle cx="110.1" cy="248.4" r="4.0" fill="#dfdca6"/><circle cx="119.6" cy="237.9" r="3.2" fill="#c2be6e"/><circle cx="107.3" cy="231.9" r="2.8" fill="#b2ad5c"/><circle cx="116.4" cy="203.7" r="4.0" fill="#d3d08a"/><circle cx="138.6" cy="236.7" r="3.1" fill="#dbd89c"/><circle cx="89.4" cy="216.8" r="4.5" fill="#d3d08a"/><circle cx="99.0" cy="224.1" r="3.8" fill="#b2ad5c"/><circle cx="110.3" cy="235.1" r="2.7" fill="#dfdca6"/><circle cx="104.5" cy="226.5" r="3.9" fill="#cbc77a"/><circle cx="115.8" cy="228.9" r="3.9" fill="#c2be6e"/><circle cx="86.7" cy="238.9" r="4.7" fill="#b2ad5c"/><circle cx="95.7" cy="226.3" r="4.3" fill="#dbd89c"/><circle cx="76.1" cy="224.4" r="4.0" fill="#cbc77a"/><circle cx="113.6" cy="247.2" r="3.8" fill="#dfdca6"/><circle cx="84.5" cy="236.8" r="4.0" fill="#b2ad5c"/><circle cx="111.5" cy="229.6" r="3.3" fill="#c2be6e"/><circle cx="89.6" cy="230.8" r="3.9" fill="#d3d08a"/><circle cx="120.0" cy="228.1" r="4.9" fill="#dfdca6"/><circle cx="87.2" cy="225.6" r="3.1" fill="#c2be6e"/><circle cx="100.6" cy="256.0" r="2.8" fill="#d3d08a"/><circle cx="95.0" cy="223.2" r="4.1" fill="#cbc77a"/><circle cx="92.8" cy="242.9" r="4.3" fill="#d3d08a"/><circle cx="70.6" cy="228.1" r="4.2" fill="#c2be6e"/><circle cx="83.9" cy="243.3" r="2.8" fill="#c2be6e"/><circle cx="83.4" cy="214.1" r="4.5" fill="#cbc77a"/><circle cx="139.7" cy="247.1" r="4.8" fill="#b2ad5c"/><circle cx="106.6" cy="253.6" r="4.0" fill="#dbd89c"/><circle cx="135.3" cy="251.5" r="2.4" fill="#cbc77a"/><circle cx="88.9" cy="222.5" r="4.9" fill="#cbc77a"/><circle cx="131.0" cy="253.6" r="3.1" fill="#cbc77a"/><circle cx="94.1" cy="222.5" r="3.6" fill="#b2ad5c"/><circle cx="105.4" cy="246.1" r="3.3" fill="#cbc77a"/><circle cx="90.7" cy="226.8" r="3.2" fill="#dbd89c"/><circle cx="124.4" cy="217.0" r="3.6" fill="#c2be6e"/><circle cx="76.6" cy="226.1" r="3.5" fill="#b2ad5c"/><circle cx="103.6" cy="229.3" r="4.8" fill="#dfdca6"/><circle cx="137.7" cy="227.9" r="3.0" fill="#dfdca6"/><circle cx="116.2" cy="247.8" r="4.8" fill="#d3d08a"/><circle cx="125.2" cy="233.9" r="4.7" fill="#dfdca6"/><circle cx="139.3" cy="220.0" r="3.8" fill="#b2ad5c"/><circle cx="138.7" cy="197.4" r="4.0" fill="#b2ad5c"/><circle cx="160.6" cy="200.9" r="4.0" fill="#b2ad5c"/><circle cx="195.3" cy="190.7" r="3.6" fill="#d3d08a"/><circle cx="143.2" cy="212.6" r="3.9" fill="#cbc77a"/><circle cx="172.4" cy="209.7" r="3.3" fill="#b2ad5c"/><circle cx="136.9" cy="210.0" r="4.8" fill="#dfdca6"/><circle cx="152.7" cy="171.1" r="2.4" fill="#dfdca6"/><circle cx="147.8" cy="234.1" r="4.3" fill="#cbc77a"/><circle cx="179.1" cy="225.3" r="3.0" fill="#dfdca6"/><circle cx="182.9" cy="165.9" r="4.5" fill="#b2ad5c"/><circle cx="146.8" cy="182.3" r="4.3" fill="#c2be6e"/><circle cx="152.0" cy="199.6" r="2.7" fill="#dbd89c"/><circle cx="157.0" cy="196.9" r="3.7" fill="#dbd89c"/><circle cx="162.0" cy="196.9" r="3.3" fill="#d3d08a"/><circle cx="153.7" cy="227.5" r="2.2" fill="#dfdca6"/><circle cx="158.4" cy="204.5" r="2.2" fill="#d3d08a"/><circle cx="173.5" cy="222.0" r="3.6" fill="#dfdca6"/><circle cx="191.8" cy="174.5" r="3.5" fill="#c2be6e"/><circle cx="144.9" cy="190.8" r="2.5" fill="#c2be6e"/><circle cx="139.0" cy="197.3" r="2.3" fill="#d3d08a"/><circle cx="177.8" cy="221.2" r="4.3" fill="#cbc77a"/><circle cx="132.4" cy="213.7" r="3.9" fill="#dbd89c"/><circle cx="167.5" cy="182.9" r="4.1" fill="#dfdca6"/><circle cx="164.4" cy="203.4" r="3.8" fill="#cbc77a"/><circle cx="177.2" cy="204.6" r="3.8" fill="#d3d08a"/><circle cx="201.5" cy="211.8" r="3.7" fill="#d3d08a"/><circle cx="137.1" cy="210.1" r="2.8" fill="#d3d08a"/><circle cx="180.6" cy="222.0" r="2.7" fill="#d3d08a"/><circle cx="194.3" cy="180.4" r="3.0" fill="#cbc77a"/><circle cx="164.5" cy="234.9" r="4.7" fill="#d3d08a"/><circle cx="166.0" cy="219.6" r="4.1" fill="#c2be6e"/><circle cx="146.1" cy="210.3" r="4.1" fill="#d3d08a"/><circle cx="169.1" cy="186.4" r="2.7" fill="#dfdca6"/><circle cx="164.0" cy="200.9" r="4.5" fill="#b2ad5c"/><circle cx="156.4" cy="196.8" r="3.6" fill="#b2ad5c"/><circle cx="149.0" cy="224.1" r="4.7" fill="#b2ad5c"/><circle cx="174.3" cy="183.8" r="2.8" fill="#c2be6e"/><circle cx="145.5" cy="203.7" r="3.3" fill="#dfdca6"/><circle cx="154.8" cy="184.6" r="2.6" fill="#dbd89c"/><circle cx="174.2" cy="208.9" r="3.6" fill="#c2be6e"/><circle cx="141.8" cy="192.4" r="4.3" fill="#c2be6e"/><circle cx="175.9" cy="215.4" r="4.1" fill="#b2ad5c"/><circle cx="145.3" cy="181.1" r="3.0" fill="#b2ad5c"/><circle cx="150.1" cy="199.6" r="3.4" fill="#c2be6e"/><circle cx="204.2" cy="186.5" r="3.7" fill="#b2ad5c"/><circle cx="147.2" cy="190.1" r="2.8" fill="#cbc77a"/><circle cx="155.2" cy="199.4" r="4.2" fill="#dbd89c"/><circle cx="137.7" cy="198.0" r="2.9" fill="#b2ad5c"/><circle cx="197.8" cy="205.4" r="2.6" fill="#d3d08a"/><circle cx="159.2" cy="204.4" r="2.7" fill="#c2be6e"/><circle cx="151.4" cy="225.7" r="2.5" fill="#cbc77a"/><circle cx="195.9" cy="183.2" r="4.2" fill="#c2be6e"/><circle cx="182.0" cy="206.8" r="2.8" fill="#c2be6e"/><circle cx="174.0" cy="181.8" r="3.1" fill="#b2ad5c"/><circle cx="171.0" cy="165.6" r="4.4" fill="#c2be6e"/><circle cx="176.5" cy="195.6" r="3.2" fill="#dbd89c"/><circle cx="150.9" cy="167.2" r="2.3" fill="#dbd89c"/><circle cx="160.0" cy="186.4" r="4.4" fill="#dfdca6"/><circle cx="171.8" cy="195.8" r="3.0" fill="#dfdca6"/><circle cx="193.9" cy="184.0" r="4.1" fill="#d3d08a"/><circle cx="140.5" cy="215.1" r="3.3" fill="#dfdca6"/><circle cx="183.9" cy="225.5" r="3.6" fill="#dbd89c"/><circle cx="156.8" cy="191.3" r="4.4" fill="#cbc77a"/><circle cx="138.4" cy="200.3" r="4.6" fill="#dbd89c"/><circle cx="156.9" cy="183.3" r="2.2" fill="#dbd89c"/><circle cx="164.0" cy="204.1" r="4.4" fill="#cbc77a"/><circle cx="151.3" cy="164.8" r="4.0" fill="#d3d08a"/><circle cx="168.6" cy="187.7" r="4.6" fill="#dbd89c"/><circle cx="184.5" cy="189.4" r="4.1" fill="#dbd89c"/><circle cx="154.1" cy="191.2" r="3.6" fill="#dfdca6"/><circle cx="186.7" cy="193.1" r="4.6" fill="#dbd89c"/><circle cx="132.7" cy="199.4" r="4.4" fill="#dbd89c"/><circle cx="159.8" cy="201.4" r="4.0" fill="#b2ad5c"/><circle cx="147.6" cy="170.1" r="4.2" fill="#b2ad5c"/><circle cx="165.4" cy="195.8" r="4.0" fill="#cbc77a"/><circle cx="163.1" cy="224.8" r="4.7" fill="#dbd89c"/><circle cx="166.4" cy="214.8" r="4.7" fill="#c2be6e"/><circle cx="150.9" cy="215.9" r="2.7" fill="#dfdca6"/><circle cx="186.0" cy="222.2" r="3.5" fill="#b2ad5c"/><circle cx="166.2" cy="214.0" r="3.5" fill="#b2ad5c"/><circle cx="185.6" cy="220.7" r="4.0" fill="#c2be6e"/><circle cx="173.0" cy="193.6" r="3.7" fill="#dfdca6"/><circle cx="158.5" cy="193.8" r="3.3" fill="#c2be6e"/><circle cx="160.0" cy="190.8" r="4.7" fill="#b2ad5c"/><circle cx="169.5" cy="192.7" r="3.0" fill="#dfdca6"/><circle cx="160.3" cy="200.4" r="4.5" fill="#dfdca6"/><circle cx="175.7" cy="228.0" r="3.4" fill="#d3d08a"/><circle cx="177.6" cy="218.3" r="3.7" fill="#dfdca6"/><circle cx="168.3" cy="205.2" r="2.2" fill="#b2ad5c"/><circle cx="193.8" cy="215.2" r="4.7" fill="#cbc77a"/><circle cx="162.2" cy="227.8" r="4.7" fill="#b2ad5c"/><circle cx="175.1" cy="223.0" r="2.2" fill="#d3d08a"/><circle cx="146.3" cy="178.4" r="4.6" fill="#dbd89c"/><circle cx="155.2" cy="173.2" r="2.4" fill="#dbd89c"/><circle cx="199.6" cy="205.5" r="4.4" fill="#dfdca6"/><circle cx="173.2" cy="178.0" r="3.1" fill="#dbd89c"/><circle cx="192.4" cy="178.4" r="3.7" fill="#dbd89c"/><circle cx="178.2" cy="151.5" r="3.3" fill="#dfdca6"/><circle cx="181.2" cy="171.2" r="3.1" fill="#dfdca6"/><circle cx="188.6" cy="151.9" r="2.1" fill="#d3d08a"/><circle cx="173.1" cy="152.6" r="3.6" fill="#dbd89c"/><circle cx="183.2" cy="161.8" r="2.4" fill="#b2ad5c"/><circle cx="180.1" cy="160.0" r="2.6" fill="#cbc77a"/><circle cx="181.8" cy="155.5" r="2.5" fill="#c2be6e"/><circle cx="168.5" cy="168.6" r="2.2" fill="#d3d08a"/><circle cx="191.4" cy="147.9" r="2.4" fill="#dfdca6"/><circle cx="200.9" cy="160.4" r="3.7" fill="#cbc77a"/><circle cx="178.4" cy="164.7" r="3.3" fill="#cbc77a"/><circle cx="181.0" cy="137.6" r="2.1" fill="#d3d08a"/><circle cx="177.1" cy="141.1" r="3.8" fill="#c2be6e"/><circle cx="184.7" cy="160.4" r="3.6" fill="#dbd89c"/><circle cx="181.7" cy="166.5" r="2.2" fill="#dfdca6"/><circle cx="175.1" cy="158.5" r="3.1" fill="#dbd89c"/><circle cx="196.7" cy="141.6" r="3.9" fill="#cbc77a"/><circle cx="198.5" cy="170.6" r="3.4" fill="#dfdca6"/><circle cx="179.0" cy="153.2" r="3.1" fill="#dfdca6"/><circle cx="171.8" cy="162.2" r="2.6" fill="#dfdca6"/><circle cx="172.2" cy="156.6" r="3.7" fill="#c2be6e"/><circle cx="180.6" cy="147.2" r="2.2" fill="#dbd89c"/><circle cx="174.5" cy="152.1" r="3.9" fill="#dfdca6"/><circle cx="67.0" cy="288.5" r="3.5" fill="#d3d08a"/><circle cx="94.9" cy="301.6" r="3.0" fill="#dbd89c"/><circle cx="114.0" cy="297.0" r="3.1" fill="#d3d08a"/><circle cx="100.1" cy="298.4" r="4.3" fill="#c2be6e"/><circle cx="78.3" cy="288.6" r="3.9" fill="#d3d08a"/><circle cx="87.0" cy="278.8" r="3.9" fill="#b2ad5c"/><circle cx="77.2" cy="280.7" r="2.8" fill="#cbc77a"/><circle cx="63.7" cy="287.0" r="4.4" fill="#d3d08a"/><circle cx="66.2" cy="281.7" r="3.8" fill="#b2ad5c"/><circle cx="98.8" cy="284.5" r="2.9" fill="#c2be6e"/><circle cx="63.0" cy="286.1" r="2.8" fill="#cbc77a"/><circle cx="101.9" cy="291.5" r="3.4" fill="#d3d08a"/><circle cx="79.9" cy="278.9" r="3.6" fill="#d3d08a"/><circle cx="84.9" cy="283.6" r="4.7" fill="#cbc77a"/><circle cx="101.4" cy="289.7" r="2.8" fill="#dbd89c"/><circle cx="96.9" cy="287.5" r="4.4" fill="#dfdca6"/><circle cx="99.4" cy="280.9" r="2.5" fill="#dfdca6"/><circle cx="102.6" cy="294.2" r="4.3" fill="#dfdca6"/><circle cx="89.3" cy="288.7" r="4.0" fill="#d3d08a"/><circle cx="80.1" cy="294.3" r="4.0" fill="#d3d08a"/><circle cx="113.7" cy="285.9" r="3.1" fill="#c2be6e"/><circle cx="89.2" cy="289.2" r="5.0" fill="#b2ad5c"/><circle cx="91.8" cy="290.5" r="2.8" fill="#dfdca6"/><circle cx="99.2" cy="297.3" r="3.2" fill="#dbd89c"/><circle cx="75.0" cy="280.7" r="4.0" fill="#dfdca6"/></g>
  </svg>
  </div>
  <!-- cursor -->
  <svg class="a" style="left:678px;top:340px" width="12" height="18" viewBox="0 0 12 18"><path d="M1 1v14l3.5-3.3 2.5 5.5 2-.9-2.4-5.4H11z" fill="#fff" stroke="#222" stroke-width="1"/></svg>

  </div></div>
  <div class="a" style="left:1085px;top:365px;width:2px;height:202px;background:#8a8a8a;border-radius:1px"></div>
  <!-- pdf toolbar -->
  <div class="a" style="left:54px;top:74px;width:980px;height:35px;background:#e5e4e4;box-shadow:0 1px 6px rgba(0,0,0,.28),0 0 2px rgba(0,0,0,.3)"></div>
  <div class="a" style="left:54px;top:74px;width:35px;height:35px;background:#fdfdfd"></div>
  <div class="a t" style="left:68px;top:84px;font-size:10.5px;line-height:14px;color:#222">1</div>
  <div class="a t" style="left:97px;top:84px;font-size:10.5px;line-height:14px;color:#7a7a7a">из 1</div>
  <div class="a" style="left:132px;top:81px;width:1px;height:21px;background:#9a9a9a"></div>
  <div class="a" style="left:851px;top:81px;width:1px;height:21px;background:#a0a0a0"></div>
  <svg class="a" style="left:0;top:74px" width="1088" height="35" viewBox="0 0 1088 35">
    <g fill="none" stroke="#444" stroke-width="1.1">
      <circle cx="159" cy="15.5" r="4.6" stroke-width="1.3"/><path d="M155.6 19l-4.6 4.8" stroke-width="1.4"/>
      <!-- fit -->
      <rect x="680.4" y="12.6" width="13.6" height="10" fill="#3a3a3a" stroke="none"/><path d="M683.8 14.6h6.8l1.5 1.6v2.8l-1.5 1.6h-6.8l-1.5-1.6v-2.8z" fill="#e5e4e4" stroke="none"/>
      <!-- minus/plus -->
      <path d="M715.8 17.3h13" stroke-width="1.1"/>
      <path d="M750.8 17.3h12.8M757.2 11.2v12.6" stroke-width="1.1"/>
      <!-- rotate -->
      <path d="M786.3 17.3a5.8 5.8 0 1 1 7.2 5.6" stroke-width="1.2"/><path d="M791.2 21.8l2.5 2.2-1.2 0.8" stroke-width="1.3"/>
      <circle cx="792" cy="17" r="1.1" fill="#333" stroke="none"/>
      <!-- two page -->
      <path d="M821.5 12.5h5.2v11h-5.2zM826.7 12.5h3.6l2.2 2.4v8.6h-5.8" stroke-width="1.1" stroke="#555"/>
      <!-- print -->
      <path d="M907.5 16.5v-5.3h7.6v5.3M904.5 21.3h-0.3v-5.8h14.2v5.8h-0.3M907.5 18.5h7.6v5.5h-7.6z" stroke-width="1.3"/>
      <!-- save disabled -->
      <path d="M940.5 12.5h11v11h-11zM942.8 12.5v3.5h6.4v-3.5M942.8 23.5v-4h6.4v4" stroke="#b5b5b5" stroke-width="1.1"/>
      <!-- fullscreen -->
      <path d="M1010.5 22.5l11-11M1015.8 11.5h5.7v5.7M1010.5 16.8v5.7h5.7" stroke-width="1.2"/>
    </g>
    <!-- read aloud -->
    <text x="869.5" y="23" font-family="Liberation Sans" font-size="13.5" fill="#3a3a3a">A</text>
    <path d="M880 13c1 1 1 3 0 4M882.3 11.6c1.7 1.7 1.7 5.2 0 6.9" fill="none" stroke="#3a3a3a" stroke-width="1"/>
    <!-- annotate -->
    <path d="M975 13h10v4l-5 5.5h-5z" fill="#444"/><path d="M976.5 14.5h7v1.5h-7z" fill="#e5e4e4"/>
    <path d="M981 23.5l6-6.5 1.8 1.7-6 6.5-2.3.6z" fill="#444" stroke="#e5e4e4" stroke-width="0.8"/>
  </svg>

</div>
</body></html>
